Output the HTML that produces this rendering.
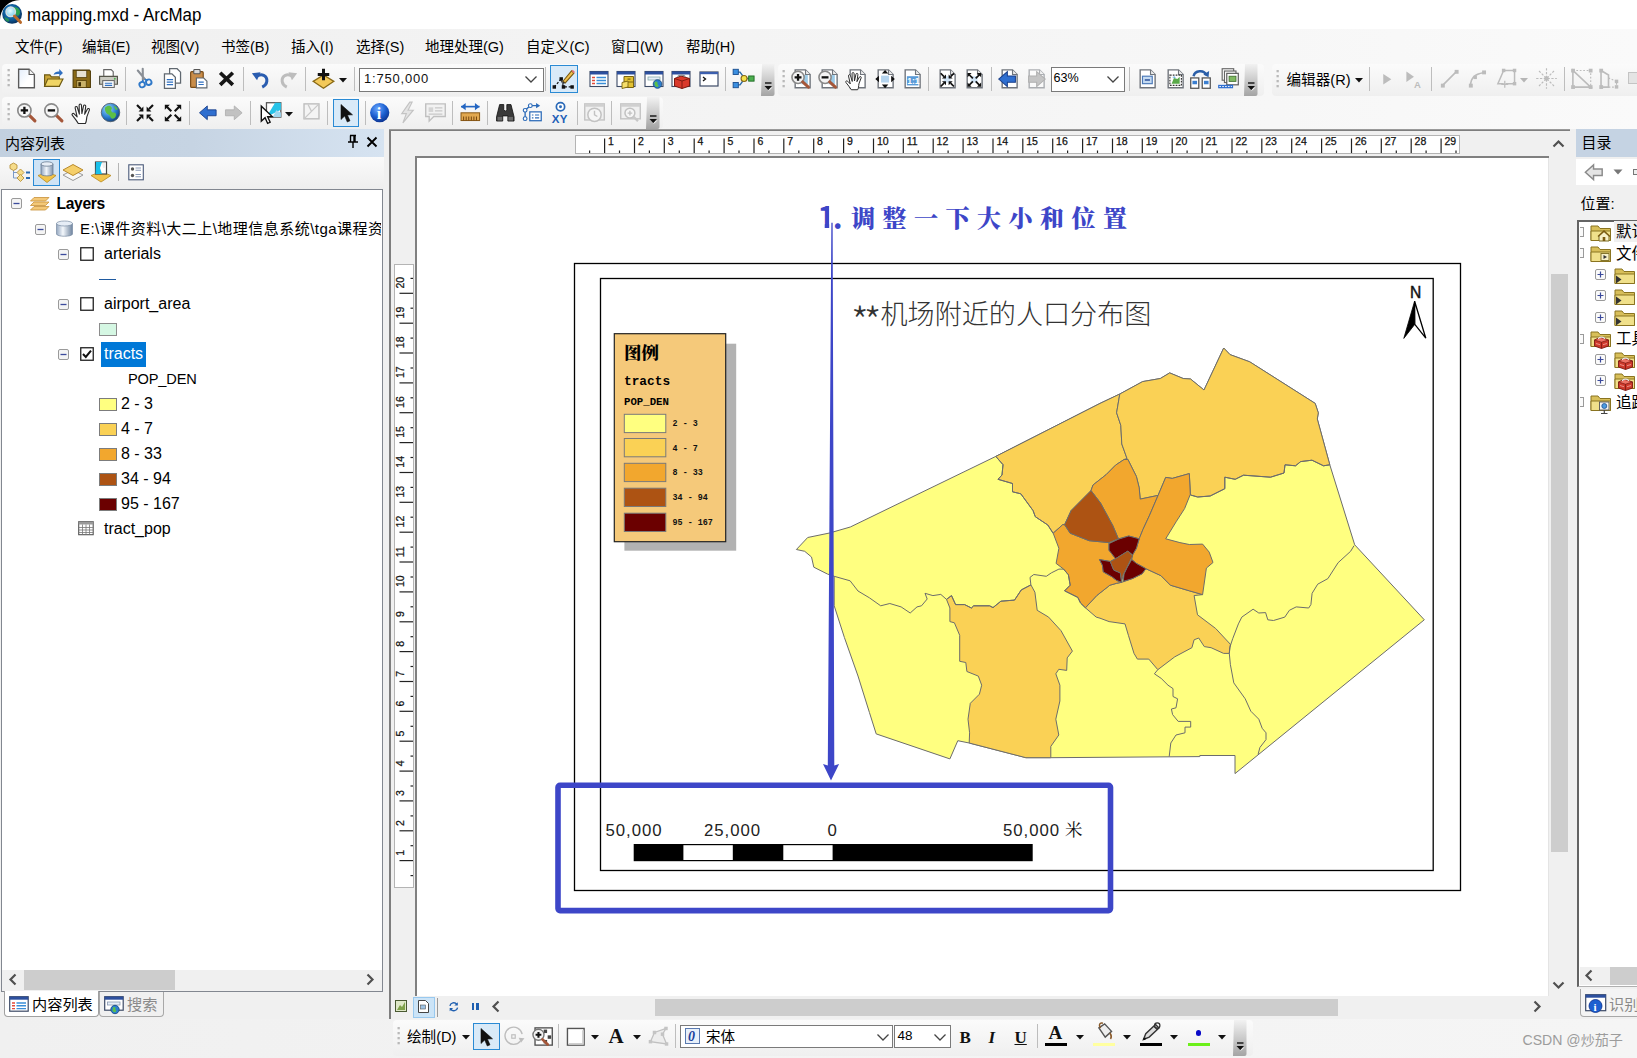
<!DOCTYPE html><html><head><meta charset="utf-8"><title>mapping.mxd - ArcMap</title><style>
html,body{margin:0;padding:0}
body{width:1637px;height:1058px;overflow:hidden;background:#f0f0f0;position:relative;font-family:"Liberation Sans","Noto Sans CJK SC",sans-serif;}
.a{position:absolute;box-sizing:border-box}
.t{position:absolute;white-space:nowrap;}
svg{position:absolute;overflow:visible}
.sep{position:absolute;width:1px;background:#c5c5c5}
</style></head><body>
<div class="a" style="left:0px;top:0px;width:1637px;height:29px;background:#fff"></div>
<svg style="left:0px;top:0px" width="26" height="28" viewBox="0 0 26 28"><defs><radialGradient id="gl" cx="45%" cy="40%" r="65%"><stop offset="0" stop-color="#2f9fd0"/><stop offset="0.55" stop-color="#0f5f9f"/><stop offset="1" stop-color="#06264f"/></radialGradient><radialGradient id="lens" cx="45%" cy="40%" r="60%"><stop offset="0" stop-color="#e8fbff"/><stop offset="1" stop-color="#7fd0ee"/></radialGradient></defs><circle cx="12.1" cy="13.9" r="9.9" fill="url(#gl)"/><path d="M14 7.5c2-.8 4.5.5 5.5 2.5s.5 4.5-1 5.5-2-1-3.5-2-2-4.5-1-6z" fill="#2fa84a" opacity="0.9"/><path d="M4.5 17c1.5 1 3.5 1 4.5 2.5s-.5 2.5-2 2-2.5-2.5-2.5-4.5z" fill="#2fa84a" opacity="0.7"/><circle cx="10.7" cy="11.8" r="4.7" fill="url(#lens)" stroke="#d8dde2" stroke-width="1.5"/><path d="M14.5 16 L20.5 22.3" stroke="#b8692a" stroke-width="3" stroke-linecap="round"/><path d="M0 0H20A20 20 0 0 0 0 20z" fill="#000"/></svg>
<div class="t " style="left:27px;top:2.3px;font-size:18.3px;line-height:25px;height:25px;color:#000;transform:scaleX(0.928);transform-origin:0 50%">mapping.mxd - ArcMap</div>
<div class="a" style="left:0px;top:29px;width:1637px;height:100px;background:linear-gradient(90deg,#f0f0f0 0%,#f4f4f4 45%,#f7f7f7 78%,#fafafa 100%)"></div>
<div class="t " style="left:15px;top:36.6px;font-size:14.5px;line-height:20px;height:20px;color:#000;">文件(F)</div>
<div class="t " style="left:82px;top:36.6px;font-size:14.5px;line-height:20px;height:20px;color:#000;">编辑(E)</div>
<div class="t " style="left:151px;top:36.6px;font-size:14.5px;line-height:20px;height:20px;color:#000;">视图(V)</div>
<div class="t " style="left:221px;top:36.6px;font-size:14.5px;line-height:20px;height:20px;color:#000;">书签(B)</div>
<div class="t " style="left:291px;top:36.6px;font-size:14.5px;line-height:20px;height:20px;color:#000;">插入(I)</div>
<div class="t " style="left:356px;top:36.6px;font-size:14.5px;line-height:20px;height:20px;color:#000;">选择(S)</div>
<div class="t " style="left:425px;top:36.6px;font-size:14.5px;line-height:20px;height:20px;color:#000;">地理处理(G)</div>
<div class="t " style="left:526px;top:36.6px;font-size:14.5px;line-height:20px;height:20px;color:#000;">自定义(C)</div>
<div class="t " style="left:611px;top:36.6px;font-size:14.5px;line-height:20px;height:20px;color:#000;">窗口(W)</div>
<div class="t " style="left:686px;top:36.6px;font-size:14.5px;line-height:20px;height:20px;color:#000;">帮助(H)</div>
<div class="a" style="left:2px;top:64px;width:773px;height:32px;background:linear-gradient(180deg,#fbfbfb,#efefef);border-radius:4px"></div>
<svg style="left:7.3px;top:68px" width="4" height="20" viewBox="0 0 4 20"><rect x="0.5" y="1" width="2.3" height="2.3" fill="#b9b9b9"/><rect x="0.5" y="6" width="2.3" height="2.3" fill="#b9b9b9"/><rect x="0.5" y="11" width="2.3" height="2.3" fill="#b9b9b9"/><rect x="0.5" y="16" width="2.3" height="2.3" fill="#b9b9b9"/></svg>
<svg style="left:15.5px;top:68px" width="21" height="21" viewBox="0 0 20 20"><defs><linearGradient id="nd" x1="0" y1="0" x2="1" y2="1"><stop offset="0" stop-color="#e4eefb"/><stop offset="0.6" stop-color="#fff"/></linearGradient></defs><path d="M2.5 1.2h10l5 5v12.6h-15z" fill="url(#nd)" stroke="#5a5a5a" stroke-width="1.3"/><path d="M12.5 1.2v5h5" fill="#f2f2f2" stroke="#5a5a5a" stroke-width="1.1"/></svg>
<svg style="left:43px;top:68px" width="21" height="21" viewBox="0 0 20 20"><path d="M1.5 17.5v-11h5l1.5 2h7.5v9z" fill="#c9a437" stroke="#6e5a14" stroke-width="1.1"/><path d="M1.5 17.5l3-7h14.5l-3.5 7z" fill="#f0d565" stroke="#6e5a14" stroke-width="1.1"/><path d="M10 6.5c1-3 3.5-3.5 5.5-3.2V1l3.5 3.7-3.5 3.5V5.8c-2-.3-3.7 0-5.5.7z" fill="#2f6fc0"/></svg>
<svg style="left:70.5px;top:68px" width="21" height="21" viewBox="0 0 20 20"><path d="M2 2h15.5l1 1v15.5h-16.500z" fill="#8a6a16" stroke="#4f3b08" stroke-width="1"/><rect x="5" y="2.5" width="10" height="6.5" fill="#e7e2d2" stroke="#4f3b08" stroke-width="0.7"/><rect x="5.5" y="12" width="9" height="6.5" fill="#c9b26a" stroke="#4f3b08" stroke-width="0.7"/><rect x="7" y="13.5" width="2.5" height="4" fill="#3a2b06"/></svg>
<svg style="left:97.5px;top:68px" width="21" height="21" viewBox="0 0 20 20"><path d="M5.5 8V1.500h7l2 2V8" fill="#fff" stroke="#666" stroke-width="1.1"/><path d="M1.5 8h17v7.500h-17z" fill="#c9c9c0" stroke="#55554a" stroke-width="1.1"/><rect x="4.5" y="12" width="11" height="6.5" fill="#fff" stroke="#666" stroke-width="1"/><path d="M6.5 14.500h7M6.5 16.500h7" stroke="#2f6fc0" stroke-width="1.1"/><circle cx="16" cy="10.3" r="0.9" fill="#4caf50"/></svg>
<svg style="left:133px;top:68px" width="21" height="21" viewBox="0 0 20 20"><g transform="rotate(-20 10 10)"><path d="M7.5 1 L11 11M12.5 1 L9 11" stroke="#8a8f96" stroke-width="2" stroke-linecap="round"/><circle cx="6.8" cy="15" r="2.6" fill="none" stroke="#2f78c8" stroke-width="1.8"/><circle cx="13.5" cy="15" r="2.6" fill="none" stroke="#2f78c8" stroke-width="1.8"/><path d="M9 11l-1.3 2M11 11l1.5 2" stroke="#2f78c8" stroke-width="1.6"/></g></svg>
<svg style="left:160.5px;top:67px" width="23" height="23" viewBox="0 0 20 20"><path d="M7.5 1.500h6.500l3 3v9.500h-9.500z" fill="#fff" stroke="#606870" stroke-width="1.1"/><path d="M3 6h6.500l3 3v9.500h-9.500z" fill="#fff" stroke="#606870" stroke-width="1.1"/><path d="M5 11h5.500M5 13.200h5.500M5 15.400h5.5" stroke="#2f6fc0" stroke-width="1.1"/></svg>
<svg style="left:188px;top:68px" width="21" height="21" viewBox="0 0 20 20"><rect x="2.5" y="3.5" width="12" height="15" rx="1" fill="#c98d4a" stroke="#7a4b16" stroke-width="1.1"/><rect x="5.5" y="1.5" width="6" height="4" rx="0.8" fill="#d9d9d9" stroke="#555" stroke-width="1"/><path d="M8 9.500h7l3 3v6.500h-10z" fill="#fff" stroke="#606870" stroke-width="1.1"/><path d="M10 13.500h5M10 15.700h5" stroke="#2f6fc0" stroke-width="1.1"/></svg>
<svg style="left:214.5px;top:67px" width="23" height="23" viewBox="0 0 20 20"><path d="M4.5 5 L15.5 15.500M15.5 5 L4.5 15.5" stroke="#161616" stroke-width="3.2"/></svg>
<svg style="left:248.5px;top:67px" width="23" height="23" viewBox="0 0 20 20"><path d="M6 8.500c5-3.5 10-1 9.5 4-.300 2.5-2 4-4 5" fill="none" stroke="#2a5db0" stroke-width="2.6"/><path d="M2.5 5.500l7.5-1-3 7z" fill="#2a5db0"/></svg>
<svg style="left:276.5px;top:67px" width="23" height="23" viewBox="0 0 20 20"><path d="M14 8.500c-5-3.5-10-1-9.5 4 .300 2.5 2 4 4 5" fill="none" stroke="#bdbdbd" stroke-width="2.6"/><path d="M17.5 5.500l-7.5-1 3 7z" fill="#bdbdbd"/></svg>
<svg style="left:311.5px;top:67px" width="23" height="23" viewBox="0 0 20 20"><path d="M1 12.5 L10 7 L19 12.5 L10 18.500z" fill="#f3c95a" stroke="#8a6a16" stroke-width="1.1"/><path d="M10 1.500v10M5 6.500h10" stroke="#111" stroke-width="2.6"/></svg>
<div class="a" style="left:125px;top:66.5px;width:1px;height:24px;background:#bdbdbd"></div>
<div class="a" style="left:242.5px;top:66.5px;width:1px;height:24px;background:#bdbdbd"></div>
<div class="a" style="left:305px;top:66.5px;width:1px;height:24px;background:#bdbdbd"></div>
<div class="a" style="left:354px;top:66.5px;width:1px;height:24px;background:#bdbdbd"></div>
<div class="a" style="left:545px;top:66.5px;width:1px;height:24px;background:#bdbdbd"></div>
<div class="a" style="left:725px;top:66.5px;width:1px;height:24px;background:#bdbdbd"></div>
<svg style="left:338.5px;top:77.5px" width="8" height="5" viewBox="0 0 8 5"><path d="M0 0h8l-4 4.500z" fill="#111"/></svg>
<div class="a" style="left:359px;top:67.5px;width:184.5px;height:24px;background:#fff;border:1px solid #7a7a7a"></div>
<div class="t " style="left:364px;top:70px;font-size:13px;line-height:18px;height:18px;color:#111;letter-spacing:0.8px">1:750,000</div>
<svg style="left:524px;top:75px" width="14" height="9" viewBox="0 0 14 9"><path d="M1.5 1.500l5.5 5.5 5.5-5.5" fill="none" stroke="#444" stroke-width="1.3"/></svg>
<div class="a" style="left:550px;top:65px;width:27.5px;height:28px;background:#d9eaf8;border:1px solid #2a8ad4"></div>
<svg style="left:552px;top:67.5px" width="23" height="23" viewBox="0 0 20 20"><path d="M2 16.5 L8 9.5 L10 16.5 L18 16.5" fill="none" stroke="#111" stroke-width="1.1" stroke-dasharray="2 1.5"/><rect x="0.5" y="15" width="3" height="3" fill="#111"/><rect x="8.5" y="15" width="3" height="3" fill="#111"/><rect x="16" y="15" width="3" height="3" fill="#111"/><rect x="6.5" y="8" width="3" height="3" fill="#111"/><path d="M9.5 11.5 L17 2.5 L19 4.5 L11.5 13z" fill="#f2c14e" stroke="#7a5a10" stroke-width="0.9"/><path d="M17 2.500l1-1 2 2-1 1z" fill="#e57373"/><path d="M9.5 11.500l-.800 2.8 2.8-1.300z" fill="#333"/></svg>
<svg style="left:588.5px;top:68.5px" width="20" height="20" viewBox="0 0 20 20"><rect x="1" y="2.5" width="18" height="15" fill="#fff" stroke="#3c4a66" stroke-width="1.1"/><rect x="1" y="2.5" width="18" height="3" fill="#2c4f9e"/><path d="M3 8.500h3M3 11.500h3M3 14.500h3" stroke="#e24a3a" stroke-width="1.5"/><path d="M7.5 8.500h9.500M7.5 11.500h9.500M7.5 14.500h9.5" stroke="#3a8ed8" stroke-width="1.5"/></svg>
<svg style="left:616px;top:68.5px" width="20" height="20" viewBox="0 0 20 20"><rect x="1" y="2.5" width="18" height="15" fill="#fff" stroke="#3c4a66" stroke-width="1.1"/><rect x="1" y="2.5" width="18" height="3" fill="#2c4f9e"/><path d="M8 7.500h9.500v11h-9.500z" fill="#e3c233" stroke="#7a6410" stroke-width="1"/><path d="M8 13h9.5" stroke="#7a6410"/><path d="M6 13.500l6-1.500v6l-6 1.500z" fill="#f5de6a" stroke="#7a6410" stroke-width="0.9"/><rect x="11.5" y="9.5" width="3" height="1.2" fill="#7a6410"/></svg>
<svg style="left:643.5px;top:68.5px" width="20" height="20" viewBox="0 0 20 20"><rect x="1" y="2.5" width="18" height="15" fill="#fff" stroke="#3c4a66" stroke-width="1.1"/><rect x="1" y="2.5" width="18" height="3" fill="#2c4f9e"/><rect x="4" y="8" width="12" height="3" fill="#e6eef8" stroke="#8aa" stroke-width="0.8"/><circle cx="13.5" cy="15" r="4.3" fill="#2b7fd0" stroke="#14457a" stroke-width="0.8"/><path d="M11 13c1.5-1 3 0 2.5 1.500s1.5 1 1 2.5-3 1-3.5-.500-1-2.5 0-3.500z" fill="#5cc04a"/></svg>
<svg style="left:671px;top:68.5px" width="20" height="20" viewBox="0 0 20 20"><rect x="1" y="2.5" width="18" height="15" fill="#fff" stroke="#3c4a66" stroke-width="1.1"/><rect x="1" y="2.5" width="18" height="3" fill="#2c4f9e"/><path d="M3.5 9.5 L10 7 L18.5 9.5 V17 L11 19.5 L3.5 17z" fill="#d9392b" stroke="#7a1810" stroke-width="1"/><path d="M3.5 9.5 L11 12 L18.5 9.500M11 12v7.5" stroke="#7a1810" fill="none" stroke-width="0.9"/><path d="M7 8 c0-2.5 7-2.5 7 0" fill="none" stroke="#888" stroke-width="1.3"/></svg>
<svg style="left:698.5px;top:68.5px" width="20" height="20" viewBox="0 0 20 20"><rect x="1" y="3" width="18" height="14" fill="#fff" stroke="#3c4a66" stroke-width="1.2"/><rect x="1" y="3" width="18" height="2.2" fill="#3c5fae"/><path d="M4 8l2.5 2L4 12" fill="none" stroke="#111" stroke-width="1.3"/></svg>
<svg style="left:732px;top:67px" width="23" height="23" viewBox="0 0 20 20"><path d="M4 4.500h3l4 5.500h6M4 15.500h3l4-5.5" fill="none" stroke="#2b6aa8" stroke-width="1.2"/><rect x="1" y="2" width="4.5" height="4.5" fill="#3b8fe0" stroke="#1b4f90" stroke-width="0.8"/><rect x="1" y="13.5" width="4.5" height="4.5" fill="#3b8fe0" stroke="#1b4f90" stroke-width="0.8"/><circle cx="10.5" cy="10" r="2.6" fill="#f5e34a" stroke="#8a6a16" stroke-width="1"/><rect x="14.5" y="7.8" width="4.7" height="4.5" fill="#4caf50" stroke="#1f6b24" stroke-width="0.8"/></svg>
<svg style="left:761px;top:64px" width="14" height="32" viewBox="0 0 14 32"><defs><linearGradient id="og761" x1="0" y1="0" x2="0" y2="1"><stop offset="0" stop-color="#f2f2f2"/><stop offset="1" stop-color="#a4a4a4"/></linearGradient></defs><path d="M1 0h12.500v30 q0 2 -2 2 h-11.500z" fill="url(#og761)"/><path d="M4 19h6.5" stroke="#111" stroke-width="1.4"/><path d="M3.5 22h7.500l-3.750 4z" fill="#111"/><path d="M7.8 26.5 l3 -3" stroke="#fff" stroke-width="1"/></svg>
<div class="a" style="left:778px;top:64px;width:486px;height:32px;background:linear-gradient(180deg,#fbfbfb,#efefef);border-radius:4px"></div>
<svg style="left:782px;top:69px" width="4" height="20" viewBox="0 0 4 20"><rect x="0.5" y="1" width="2.3" height="2.3" fill="#b9b9b9"/><rect x="0.5" y="6" width="2.3" height="2.3" fill="#b9b9b9"/><rect x="0.5" y="11" width="2.3" height="2.3" fill="#b9b9b9"/><rect x="0.5" y="16" width="2.3" height="2.3" fill="#b9b9b9"/></svg>
<svg style="left:789.5px;top:67px" width="23" height="23" viewBox="0 0 20 20"><path d="M4.5 2.500h9l4 4v11.500h-13z" fill="#fff" stroke="#70757c" stroke-width="1.2"/><path d="M13.5 2.500v4h4" fill="#eee" stroke="#70757c" stroke-width="1"/><rect x="10" y="7" width="5.5" height="8" fill="#9ccbe8"/><circle cx="7" cy="9" r="5.3" fill="#f4f4f4" stroke="#8a8a8a" stroke-width="1.4"/><path d="M4 9h6M7 6v6" stroke="#111" stroke-width="2"/><path d="M11 13l5 4.5" stroke="#a5573a" stroke-width="2.6" stroke-linecap="round"/></svg>
<svg style="left:817px;top:67px" width="23" height="23" viewBox="0 0 20 20"><path d="M4.5 2.500h9l4 4v11.500h-13z" fill="#fff" stroke="#70757c" stroke-width="1.2"/><path d="M13.5 2.500v4h4" fill="#eee" stroke="#70757c" stroke-width="1"/><rect x="10" y="7" width="5.5" height="8" fill="#9ccbe8"/><circle cx="7" cy="9" r="5.3" fill="#f4f4f4" stroke="#8a8a8a" stroke-width="1.4"/><path d="M4 9h6" stroke="#111" stroke-width="2"/><path d="M11 13l5 4.5" stroke="#a5573a" stroke-width="2.6" stroke-linecap="round"/></svg>
<svg style="left:844.5px;top:67px" width="23" height="23" viewBox="0 0 20 20"><path d="M4.5 2.500h9l4 4v11.500h-13z" fill="#fff" stroke="#70757c" stroke-width="1.2"/><path d="M13.5 2.500v4h4" fill="#eee" stroke="#70757c" stroke-width="1"/><g transform="translate(-0.5,3.2) scale(0.85)"><path d="M7 19.5C5.5 17 3.5 14.5 1.5 12C0.8 11 2.2 9.8 3.3 10.8L6 13.5L4.2 5.5C3.9 4 5.8 3.5 6.2 5L8 11L7.8 3C7.8 1.5 9.8 1.5 9.9 3L10.3 10.5L11.8 3.6C12.1 2.2 14 2.6 13.8 4L12.8 11.2L15.3 6.5C16 5.3 17.6 6.1 17.1 7.4L14.8 13.5C14.5 16 14.5 18 13.5 19.5Z" fill="#fff" stroke="#2a2a2a" stroke-width="1" stroke-linejoin="round"/></g></svg>
<svg style="left:872.5px;top:67px" width="23" height="23" viewBox="0 0 20 20"><path d="M4.5 2.500h9l4 4v11.500h-13z" fill="#fff" stroke="#70757c" stroke-width="1.2"/><path d="M13.5 2.500v4h4" fill="#eee" stroke="#70757c" stroke-width="1"/><rect x="7" y="7.5" width="7" height="6" fill="#b5d4ee"/><path d="M10.5 2.500l2.8 3.200h-5.600zM10.5 18.500l2.8-3.200h-5.600zM2 10.500l3.2-2.800v5.600zM19 10.500l-3.2-2.800v5.600z" fill="#111"/></svg>
<svg style="left:899.8px;top:67px" width="23" height="23" viewBox="0 0 20 20"><path d="M4.5 2.500h9l4 4v11.500h-13z" fill="#fff" stroke="#70757c" stroke-width="1.2"/><path d="M13.5 2.500v4h4" fill="#eee" stroke="#70757c" stroke-width="1"/><rect x="6" y="8" width="10" height="8" fill="#5a9bd8"/><text x="6.2" y="15" font-family="Liberation Sans,sans-serif" font-size="7.5" font-weight="bold" fill="#fff">1:1</text></svg>
<svg style="left:934.8px;top:67px" width="23" height="23" viewBox="0 0 20 20"><path d="M4.5 2.500h9l4 4v11.500h-13z" fill="#fff" stroke="#70757c" stroke-width="1.2"/><path d="M13.5 2.500v4h4" fill="#eee" stroke="#70757c" stroke-width="1"/><rect x="7.5" y="8" width="6" height="5.5" fill="#cfe3f5"/><g transform="translate(3.5,4) scale(0.720)"><g transform=""><path d="M8.4 8.4V3.6L3.6 8.4z" fill="#111"/><path d="M2 2L6 6" stroke="#111" stroke-width="2.1"/></g><g transform="matrix(-1 0 0 1 20 0)"><path d="M8.4 8.4V3.6L3.6 8.4z" fill="#111"/><path d="M2 2L6 6" stroke="#111" stroke-width="2.1"/></g><g transform="matrix(1 0 0 -1 0 20)"><path d="M8.4 8.4V3.6L3.6 8.4z" fill="#111"/><path d="M2 2L6 6" stroke="#111" stroke-width="2.1"/></g><g transform="matrix(-1 0 0 -1 20 20)"><path d="M8.4 8.4V3.6L3.6 8.4z" fill="#111"/><path d="M2 2L6 6" stroke="#111" stroke-width="2.1"/></g></g></svg>
<svg style="left:962.2px;top:67px" width="23" height="23" viewBox="0 0 20 20"><path d="M4.5 2.500h9l4 4v11.500h-13z" fill="#fff" stroke="#70757c" stroke-width="1.2"/><path d="M13.5 2.500v4h4" fill="#eee" stroke="#70757c" stroke-width="1"/><rect x="7.5" y="8" width="6" height="5.5" fill="#cfe3f5"/><g transform="translate(3.5,4) scale(0.720)"><g transform=""><path d="M1.8 1.8h5L1.8 6.8z" fill="#111"/><path d="M3.8 3.8L8.3 8.3" stroke="#111" stroke-width="2.1"/></g><g transform="matrix(-1 0 0 1 20 0)"><path d="M1.8 1.8h5L1.8 6.8z" fill="#111"/><path d="M3.8 3.8L8.3 8.3" stroke="#111" stroke-width="2.1"/></g><g transform="matrix(1 0 0 -1 0 20)"><path d="M1.8 1.8h5L1.8 6.8z" fill="#111"/><path d="M3.8 3.8L8.3 8.3" stroke="#111" stroke-width="2.1"/></g><g transform="matrix(-1 0 0 -1 20 20)"><path d="M1.8 1.8h5L1.8 6.8z" fill="#111"/><path d="M3.8 3.8L8.3 8.3" stroke="#111" stroke-width="2.1"/></g></g></svg>
<svg style="left:997.2px;top:67px" width="23" height="23" viewBox="0 0 20 20"><path d="M4.5 2.500h9l4 4v11.500h-13z" fill="#fff" stroke="#70757c" stroke-width="1.2"/><path d="M13.5 2.500v4h4" fill="#eee" stroke="#70757c" stroke-width="1"/><path d="M1.5 10.5 L9 4v3.800h7v5.400h-7V17z" fill="#2f6fd0" stroke="#1a3f8a" stroke-width="0.9"/></svg>
<svg style="left:1024.1px;top:67px" width="23" height="23" viewBox="0 0 20 20"><g opacity="0.550"><path d="M4.5 2.500h9l4 4v11.500h-13z" fill="#fff" stroke="#70757c" stroke-width="1.2"/><path d="M13.5 2.500v4h4" fill="#eee" stroke="#70757c" stroke-width="1"/></g><path d="M18.5 10.5 L11 4v3.800h-7v5.400h7V17z" fill="#c4c4c4" stroke="#b0b0b0" stroke-width="0.9"/></svg>
<svg style="left:1135.4px;top:67px" width="23" height="23" viewBox="0 0 20 20"><path d="M4.5 2.500h9l4 4v11.500h-13z" fill="#fff" stroke="#70757c" stroke-width="1.2"/><path d="M13.5 2.500v4h4" fill="#eee" stroke="#70757c" stroke-width="1"/><rect x="6.5" y="8" width="8.5" height="6.5" fill="#c5dbf2" stroke="#4a78b8" stroke-width="1"/><path d="M8.5 11.300h4.5" stroke="#2a4f9a" stroke-width="1.3"/></svg>
<svg style="left:1162.8px;top:67px" width="23" height="23" viewBox="0 0 20 20"><path d="M4.5 2.500h9l4 4v11.500h-13z" fill="#fff" stroke="#70757c" stroke-width="1.2"/><path d="M13.5 2.500v4h4" fill="#eee" stroke="#70757c" stroke-width="1"/><rect x="6" y="7" width="10" height="9" fill="none" stroke="#333" stroke-width="1" stroke-dasharray="1.5 1"/><path d="M7.5 14.500l2-5 3 1 2-2v6z" fill="#5aa94a"/><path d="M8 9l2-1 1.5 2" fill="#6aaee0"/></svg>
<svg style="left:1189.3px;top:67px" width="23" height="23" viewBox="0 0 20 20"><path d="M4 8c1-5 9-6 11-1" fill="none" stroke="#2b5fa8" stroke-width="2.2"/><path d="M17.5 3.500l-.500 5.5-4.5-2.500z" fill="#2b5fa8"/><rect x="1.5" y="9.5" width="7" height="9" fill="#fff" stroke="#555" stroke-width="1.1"/><rect x="11.5" y="9.5" width="7" height="9" fill="#fff" stroke="#555" stroke-width="1.1"/><rect x="3" y="12" width="4" height="3" fill="#3b7fd0"/><rect x="13" y="12" width="4" height="3" fill="#3b7fd0"/></svg>
<svg style="left:1216.7px;top:67px" width="23" height="23" viewBox="0 0 20 20"><rect x="4.5" y="1.5" width="10" height="10" fill="#fff" stroke="#666" stroke-width="1"/><rect x="6.5" y="3.5" width="10" height="10" fill="#fff" stroke="#666" stroke-width="1"/><rect x="8.5" y="5.5" width="10" height="10" fill="#fff" stroke="#555" stroke-width="1"/><rect x="10.5" y="8" width="6" height="4.5" fill="#7fb860" stroke="#3b6a2a" stroke-width="0.7"/><rect x="1" y="15.5" width="13" height="3" fill="#2f6fd0"/><path d="M2 17h11" stroke="#fff" stroke-width="0.8" stroke-dasharray="1.5 1"/></svg>
<div class="a" style="left:928.3px;top:66.5px;width:1px;height:24px;background:#bdbdbd"></div>
<div class="a" style="left:990.7px;top:66.5px;width:1px;height:24px;background:#bdbdbd"></div>
<div class="a" style="left:1129.4px;top:66.5px;width:1px;height:24px;background:#bdbdbd"></div>
<div class="a" style="left:1050.5px;top:66.5px;width:74px;height:25px;background:#fff;border:1px solid #7a7a7a"></div>
<div class="t " style="left:1053.5px;top:70px;font-size:12.6px;line-height:17px;height:17px;color:#000;">63%</div>
<svg style="left:1106px;top:75px" width="14" height="9" viewBox="0 0 14 9"><path d="M1.5 1.500l5.5 5.5 5.5-5.5" fill="none" stroke="#444" stroke-width="1.3"/></svg>
<svg style="left:1244px;top:64px" width="14" height="32" viewBox="0 0 14 32"><defs><linearGradient id="og1244" x1="0" y1="0" x2="0" y2="1"><stop offset="0" stop-color="#f2f2f2"/><stop offset="1" stop-color="#a4a4a4"/></linearGradient></defs><path d="M1 0h12.500v30 q0 2 -2 2 h-11.500z" fill="url(#og1244)"/><path d="M4 19h6.5" stroke="#111" stroke-width="1.4"/><path d="M3.5 22h7.500l-3.750 4z" fill="#111"/><path d="M7.8 26.5 l3 -3" stroke="#fff" stroke-width="1"/></svg>
<div class="a" style="left:1272px;top:64px;width:380px;height:32px;background:linear-gradient(180deg,#fbfbfb,#efefef);border-radius:4px"></div>
<svg style="left:1276px;top:69px" width="4" height="20" viewBox="0 0 4 20"><rect x="0.5" y="1" width="2.3" height="2.3" fill="#b9b9b9"/><rect x="0.5" y="6" width="2.3" height="2.3" fill="#b9b9b9"/><rect x="0.5" y="11" width="2.3" height="2.3" fill="#b9b9b9"/><rect x="0.5" y="16" width="2.3" height="2.3" fill="#b9b9b9"/></svg>
<div class="t " style="left:1286.5px;top:69.5px;font-size:14.6px;line-height:20px;height:20px;color:#000;">编辑器(R)</div>
<svg style="left:1355px;top:77.5px" width="8" height="5" viewBox="0 0 8 5"><path d="M0 0h8l-4 4.500z" fill="#111"/></svg>
<div class="a" style="left:1369px;top:66.5px;width:1px;height:24px;background:#bdbdbd"></div>
<div class="a" style="left:1431.4px;top:66.5px;width:1px;height:24px;background:#bdbdbd"></div>
<div class="a" style="left:1563.6px;top:66.5px;width:1px;height:24px;background:#bdbdbd"></div>
<svg style="left:1379px;top:71px" width="17" height="17" viewBox="0 0 20 20"><path d="M5 3.500v12.500l9.5-6.300z" fill="#bcbcbc"/></svg>
<svg style="left:1404.4px;top:69.5px" width="19" height="19" viewBox="0 0 20 20"><path d="M2.5 1.500v11l8-5.500z" fill="#bcbcbc"/><text x="10.5" y="18.5" font-family="Liberation Sans,sans-serif" font-weight="bold" font-size="10" fill="#bcbcbc">A</text></svg>
<svg style="left:1438.3px;top:67px" width="23" height="23" viewBox="0 0 20 20"><path d="M4 16L16 4" stroke="#bcbcbc" stroke-width="1.4"/><rect x="2.5" y="14.5" width="3.4" height="3.4" fill="#bcbcbc"/><rect x="14.5" y="2.5" width="3.4" height="3.4" fill="#bcbcbc"/></svg>
<svg style="left:1466.3px;top:67px" width="23" height="23" viewBox="0 0 20 20"><path d="M4 16c0-6 4-10 11-11" fill="none" stroke="#bcbcbc" stroke-width="1.4"/><rect x="2.5" y="14.5" width="3.4" height="3.4" fill="#bcbcbc"/><rect x="14" y="3" width="3.4" height="3.4" fill="#bcbcbc"/><rect x="6.5" y="7.5" width="3" height="3" fill="#bcbcbc"/></svg>
<svg style="left:1494.7px;top:67px" width="23" height="23" viewBox="0 0 20 20"><path d="M7.5 3h9.500v11.500h-7.500M7.5 3 L2.5 14.500h5" fill="none" stroke="#bcbcbc" stroke-width="1.3"/><rect x="6" y="1.5" width="3" height="3" fill="#bcbcbc"/><rect x="15.5" y="1.5" width="3" height="3" fill="#bcbcbc"/><rect x="15.5" y="13" width="3" height="3" fill="#bcbcbc"/><path d="M8.5 12v6M5.5 15h6" stroke="#bcbcbc" stroke-width="1.1"/></svg>
<svg style="left:1534.7px;top:67px" width="23" height="23" viewBox="0 0 20 20"><path d="M10 1v18M1 10h18M3.5 3.500l13 13M16.5 3.500l-13 13" stroke="#bcbcbc" stroke-width="1" stroke-dasharray="2 1.3"/><rect x="8.3" y="8.3" width="3.4" height="3.4" fill="#bcbcbc"/></svg>
<svg style="left:1569.5px;top:67px" width="23" height="23" viewBox="0 0 20 20"><path d="M2.5 3v14.500h15.500z" fill="none" stroke="#bcbcbc" stroke-width="1.4"/><path d="M2.5 3h15.500v14.5" fill="none" stroke="#bcbcbc" stroke-width="1" stroke-dasharray="1.5 1.5"/><rect x="1" y="1.5" width="3.3" height="3.3" fill="#bcbcbc"/><rect x="16.3" y="1.5" width="3.3" height="3.3" fill="#bcbcbc"/><rect x="1" y="15.8" width="3.3" height="3.3" fill="#bcbcbc"/><rect x="16.3" y="15.8" width="3.3" height="3.3" fill="#bcbcbc"/></svg>
<svg style="left:1597px;top:67px" width="23" height="23" viewBox="0 0 20 20"><path d="M3.5 3v14.500M3.5 3l6.5 4v10.500h-6.5" fill="none" stroke="#bcbcbc" stroke-width="1.4"/><path d="M10 9.500l7 3v5h-7" fill="none" stroke="#bcbcbc" stroke-width="1" stroke-dasharray="1.5 1.5"/><rect x="2" y="1.5" width="3.3" height="3.3" fill="#bcbcbc"/><rect x="2" y="15.8" width="3.3" height="3.3" fill="#bcbcbc"/><rect x="15.5" y="11" width="3" height="3" fill="#bcbcbc"/><rect x="15.5" y="15.8" width="3" height="3" fill="#bcbcbc"/></svg>
<svg style="left:1519.7px;top:77.5px" width="8" height="5" viewBox="0 0 8 5"><path d="M0 0h8l-4 4.500z" fill="#b5b5b5"/></svg>
<div class="a" style="left:1628px;top:72px;width:12px;height:12px;border:1.5px solid #c4c4c4;background:#e4e4e4"></div>
<div class="a" style="left:2px;top:97px;width:661px;height:32px;background:linear-gradient(180deg,#fbfbfb,#efefef);border-radius:4px"></div>
<svg style="left:7.3px;top:101.5px" width="4" height="20" viewBox="0 0 4 20"><rect x="0.5" y="1" width="2.3" height="2.3" fill="#b9b9b9"/><rect x="0.5" y="6" width="2.3" height="2.3" fill="#b9b9b9"/><rect x="0.5" y="11" width="2.3" height="2.3" fill="#b9b9b9"/><rect x="0.5" y="16" width="2.3" height="2.3" fill="#b9b9b9"/></svg>
<svg style="left:15.5px;top:102px" width="21" height="21" viewBox="0 0 20 20"><path d="M12 12l6 6" stroke="#a5573a" stroke-width="3" stroke-linecap="round"/><circle cx="8" cy="8" r="6.3" fill="#f7f7f7" stroke="#8a8a8a" stroke-width="1.6"/><path d="M4.5 8h7M8 4.500v7" stroke="#111" stroke-width="2.2"/></svg>
<svg style="left:43px;top:102px" width="21" height="21" viewBox="0 0 20 20"><path d="M12 12l6 6" stroke="#a5573a" stroke-width="3" stroke-linecap="round"/><circle cx="8" cy="8" r="6.3" fill="#f7f7f7" stroke="#8a8a8a" stroke-width="1.6"/><path d="M4.5 8h7" stroke="#111" stroke-width="2.2"/></svg>
<svg style="left:70px;top:101.5px" width="22" height="22" viewBox="0 0 20 20"><g transform="translate(0.5,0)"><path d="M7 19.5C5.5 17 3.5 14.5 1.5 12C0.8 11 2.2 9.8 3.3 10.8L6 13.5L4.2 5.5C3.9 4 5.8 3.5 6.2 5L8 11L7.8 3C7.8 1.5 9.8 1.5 9.9 3L10.3 10.5L11.8 3.6C12.1 2.2 14 2.6 13.8 4L12.8 11.2L15.3 6.5C16 5.3 17.6 6.1 17.1 7.4L14.8 13.5C14.5 16 14.5 18 13.5 19.5Z" fill="#fff" stroke="#2a2a2a" stroke-width="1" stroke-linejoin="round"/></g></svg>
<svg style="left:99.5px;top:102px" width="21" height="21" viewBox="0 0 20 20"><defs><radialGradient id="gg" cx="35%" cy="30%" r="75%"><stop offset="0" stop-color="#9fd8ff"/><stop offset="0.6" stop-color="#2b7fd0"/><stop offset="1" stop-color="#123f7a"/></radialGradient></defs><circle cx="10" cy="10" r="8.8" fill="url(#gg)" stroke="#4a5a6a" stroke-width="0.8"/><path d="M5 5c2-2 5-2 6 0s-1 2 0 4 3 0 4 2-1 5-3 5-2-3-4-4-4-4-3-7z" fill="#5cbf45"/><path d="M13 3.500c2 .500 3.5 2 4 3.500l-2 .500z" fill="#5cbf45"/></svg>
<svg style="left:135px;top:102.5px" width="20" height="20" viewBox="0 0 20 20"><g transform=""><path d="M8.4 8.4V3.6L3.6 8.4z" fill="#111"/><path d="M2 2L6 6" stroke="#111" stroke-width="2.1"/></g><g transform="matrix(-1 0 0 1 20 0)"><path d="M8.4 8.4V3.6L3.6 8.4z" fill="#111"/><path d="M2 2L6 6" stroke="#111" stroke-width="2.1"/></g><g transform="matrix(1 0 0 -1 0 20)"><path d="M8.4 8.4V3.6L3.6 8.4z" fill="#111"/><path d="M2 2L6 6" stroke="#111" stroke-width="2.1"/></g><g transform="matrix(-1 0 0 -1 20 20)"><path d="M8.4 8.4V3.6L3.6 8.4z" fill="#111"/><path d="M2 2L6 6" stroke="#111" stroke-width="2.1"/></g></svg>
<svg style="left:162.5px;top:102.5px" width="20" height="20" viewBox="0 0 20 20"><g transform=""><path d="M1.8 1.8h5L1.8 6.8z" fill="#111"/><path d="M3.8 3.8L8.3 8.3" stroke="#111" stroke-width="2.1"/></g><g transform="matrix(-1 0 0 1 20 0)"><path d="M1.8 1.8h5L1.8 6.8z" fill="#111"/><path d="M3.8 3.8L8.3 8.3" stroke="#111" stroke-width="2.1"/></g><g transform="matrix(1 0 0 -1 0 20)"><path d="M1.8 1.8h5L1.8 6.8z" fill="#111"/><path d="M3.8 3.8L8.3 8.3" stroke="#111" stroke-width="2.1"/></g><g transform="matrix(-1 0 0 -1 20 20)"><path d="M1.8 1.8h5L1.8 6.8z" fill="#111"/><path d="M3.8 3.8L8.3 8.3" stroke="#111" stroke-width="2.1"/></g></svg>
<svg style="left:197.7px;top:102.7px" width="19.6" height="19.6" viewBox="0 0 20 20"><path d="M1.5 10 L9.5 3v4h9v6h-9v4z" fill="#2f6fd0" stroke="#1a3f8a" stroke-width="0.9"/></svg>
<svg style="left:223.7px;top:102.7px" width="19.6" height="19.6" viewBox="0 0 20 20"><path d="M18.5 10 L10.5 3v4h-9v6h9v4z" fill="#c2c2c2" stroke="#b0b0b0" stroke-width="0.9"/></svg>
<svg style="left:258.5px;top:101px" width="23" height="23" viewBox="0 0 20 20"><rect x="6.5" y="1.5" width="12.5" height="12.5" fill="#fff" stroke="#555" stroke-width="1.1"/><path d="M6.5 14 L14 1.500h5v6z" fill="#27c3e8"/><path d="M12 14l3-6 4 2v4z" fill="#9fd7ef"/><path d="M2 4.5 L2 17.5 L5.3 14.5 L7.5 19.5 L9.7 18.5 L7.5 13.7 L11.5 13.500z" fill="#fff" stroke="#111" stroke-width="1.2"/></svg>
<svg style="left:299.5px;top:101px" width="23" height="23" viewBox="0 0 20 20"><rect x="3.5" y="2.5" width="13" height="13" fill="#f4f4f4" stroke="#bdbdbd" stroke-width="1.2"/><path d="M3.5 15.5 L10 9 L16.5 2.500M10 9l-3-6" fill="none" stroke="#c8c8c8" stroke-width="1.1"/></svg>
<svg style="left:369.3px;top:101.8px" width="21.4" height="21.4" viewBox="0 0 20 20"><defs><radialGradient id="ig" cx="40%" cy="30%" r="75%"><stop offset="0" stop-color="#6aa8ff"/><stop offset="0.550" stop-color="#1c5fd0"/><stop offset="1" stop-color="#0b2f8a"/></radialGradient></defs><circle cx="10" cy="10" r="9" fill="url(#ig)"/><text x="7.3" y="15.5" font-family="Liberation Serif,serif" font-weight="bold" font-size="15" fill="#fff">i</text></svg>
<svg style="left:396px;top:101px" width="23" height="23" viewBox="0 0 20 20"><path d="M12 1 L5 11h4l-3 8 9-11h-4.500l3.5-7z" fill="#e4e4e4" stroke="#c3c3c3" stroke-width="1"/></svg>
<svg style="left:423.5px;top:101px" width="23" height="23" viewBox="0 0 20 20"><path d="M1.5 2.500h17v11h-10l-4 4v-4h-3z" fill="#f2f2f2" stroke="#c0c0c0" stroke-width="1.2"/><rect x="4" y="5.5" width="4" height="4" fill="#d4d4d4"/><path d="M9.5 6h6.500M9.5 8.500h6.500M4 11.500h12" stroke="#c8c8c8" stroke-width="1.1"/></svg>
<svg style="left:459.7px;top:102.2px" width="20.6" height="20.6" viewBox="0 0 20 20"><path d="M1 4.500h18" stroke="#2466c2" stroke-width="1.6"/><path d="M1 4.500l4.5-3.500v7zM19 4.500l-4.5-3.500v7z" fill="#2466c2"/><rect x="1" y="10.5" width="18" height="7.5" fill="#e2a84f" stroke="#8a5a18" stroke-width="1"/><path d="M3.5 14v4M6 14v4M8.5 14v4M11 14v4M13.5 14v4M16 14v4" stroke="#7a4a10" stroke-width="1"/></svg>
<svg style="left:494.7px;top:102.2px" width="20.6" height="20.6" viewBox="0 0 20 20"><path d="M4.5 2.500h4v5l1.5 1.5 1.5-1.500v-5h4l3 12v4h-6v-5h-5v5h-6v-4z" fill="#3a3a3a" stroke="#111" stroke-width="0.8"/><rect x="2.5" y="14.5" width="4.5" height="3.5" fill="#6a6a6a"/><rect x="13" y="14.5" width="4.5" height="3.5" fill="#6a6a6a"/></svg>
<svg style="left:522.1px;top:102.1px" width="20.8" height="20.8" viewBox="0 0 20 20"><path d="M3 15.500v-7.500l5-4.500h7" fill="none" stroke="#2b6ab8" stroke-width="1.3"/><path d="M13.5 1l4 2.5-4 2.500z" fill="#2b6ab8"/><circle cx="3" cy="8" r="1.8" fill="#fff" stroke="#2b6ab8" stroke-width="1.1"/><circle cx="8" cy="3.5" r="1.8" fill="#fff" stroke="#2b6ab8" stroke-width="1.1"/><circle cx="3" cy="16" r="1.8" fill="#fff" stroke="#2b6ab8" stroke-width="1.1"/><rect x="7.5" y="9.5" width="11" height="8.5" fill="#fff" stroke="#2b6ab8" stroke-width="1.2"/><path d="M9.5 12.500h1.500M12.5 12.500h4M9.5 15.300h1.500M12.5 15.300h4" stroke="#2b6ab8" stroke-width="1.1"/></svg>
<svg style="left:548.5px;top:101px" width="23" height="23" viewBox="0 0 20 20"><circle cx="10" cy="5" r="3.6" fill="#fff" stroke="#2b6ab8" stroke-width="1.5"/><circle cx="10" cy="5" r="1.3" fill="#2b6ab8"/><text x="2.3" y="19" font-family="Liberation Sans,sans-serif" font-weight="bold" font-size="10" fill="#1f5fb8" letter-spacing="0.3">XY</text></svg>
<svg style="left:582.5px;top:101px" width="23" height="23" viewBox="0 0 20 20"><rect x="1.5" y="2.5" width="17" height="14" fill="#f0f0f0" stroke="#c4c4c4" stroke-width="1.2"/><rect x="1.5" y="2.5" width="17" height="2.5" fill="#d0d0d0"/><circle cx="10" cy="12" r="5.8" fill="#f6f6f6" stroke="#c2c2c2" stroke-width="1.3"/><path d="M10 8.500v3.500l2.5 1.5" fill="none" stroke="#c2c2c2" stroke-width="1.2"/></svg>
<svg style="left:618.5px;top:101px" width="23" height="23" viewBox="0 0 20 20"><rect x="1.5" y="2.5" width="17" height="13" fill="#f0f0f0" stroke="#c4c4c4" stroke-width="1.2"/><rect x="1.5" y="2.5" width="17" height="2.5" fill="#d0d0d0"/><circle cx="9.5" cy="10.5" r="4.3" fill="#f6f6f6" stroke="#c2c2c2" stroke-width="1.3"/><path d="M7.5 10.500h4M9.5 8.500v4" stroke="#c2c2c2" stroke-width="1.2"/><path d="M12.5 13.500l4 4" stroke="#c8c8c8" stroke-width="2"/></svg>
<div class="a" style="left:126px;top:100.5px;width:1px;height:24px;background:#bdbdbd"></div>
<div class="a" style="left:189px;top:100.5px;width:1px;height:24px;background:#bdbdbd"></div>
<div class="a" style="left:250px;top:100.5px;width:1px;height:24px;background:#bdbdbd"></div>
<div class="a" style="left:326.5px;top:100.5px;width:1px;height:24px;background:#bdbdbd"></div>
<div class="a" style="left:365px;top:100.5px;width:1px;height:24px;background:#bdbdbd"></div>
<div class="a" style="left:451.5px;top:100.5px;width:1px;height:24px;background:#bdbdbd"></div>
<div class="a" style="left:486.5px;top:100.5px;width:1px;height:24px;background:#bdbdbd"></div>
<div class="a" style="left:576.5px;top:100.5px;width:1px;height:24px;background:#bdbdbd"></div>
<div class="a" style="left:611px;top:100.5px;width:1px;height:24px;background:#bdbdbd"></div>
<svg style="left:285px;top:111.5px" width="8" height="5" viewBox="0 0 8 5"><path d="M0 0h8l-4 4.500z" fill="#111"/></svg>
<div class="a" style="left:332.5px;top:99px;width:26.5px;height:27.5px;background:#d9eaf8;border:1px solid #2a8ad4"></div>
<svg style="left:335.5px;top:102.5px" width="20" height="20" viewBox="0 0 20 20"><path d="M5 1.5 L5 16.5 L8.7 13 L11.3 19 L14 17.8 L11.4 12 L16.5 11.800z" fill="#111" stroke="#111" stroke-width="0.6"/></svg>
<svg style="left:646px;top:97px" width="14" height="32" viewBox="0 0 14 32"><defs><linearGradient id="og646" x1="0" y1="0" x2="0" y2="1"><stop offset="0" stop-color="#f2f2f2"/><stop offset="1" stop-color="#a4a4a4"/></linearGradient></defs><path d="M1 0h12.500v30 q0 2 -2 2 h-11.500z" fill="url(#og646)"/><path d="M4 19h6.5" stroke="#111" stroke-width="1.4"/><path d="M3.5 22h7.500l-3.750 4z" fill="#111"/><path d="M7.8 26.5 l3 -3" stroke="#fff" stroke-width="1"/></svg>
<div class="a" style="left:0px;top:1019px;width:1637px;height:39px;background:linear-gradient(90deg,#f0f0f0 0%,#f3f3f3 45%,#f5f5f5 100%)"></div>
<div class="a" style="left:0px;top:129px;width:384px;height:27.5px;background:linear-gradient(90deg,#c2d0df 0%,#c6d4e3 50%,#d6e3f1 100%)"></div>
<div class="t " style="left:5px;top:132.5px;font-size:15px;line-height:21px;height:21px;color:#000;">内容列表</div>
<svg style="left:346px;top:134px" width="14" height="16" viewBox="0 0 14 16"><path d="M4 1.5h6M4.5 1.5v6M9 1.5v6M8 1.5v6M2 8h10M7 8v6" stroke="#000" stroke-width="1.4" fill="none"/></svg>
<svg style="left:366px;top:136px" width="12" height="12" viewBox="0 0 12 12"><path d="M1.5 1.5L10.5 10.5M10.5 1.5L1.5 10.5" stroke="#000" stroke-width="1.9"/></svg>
<div class="a" style="left:0px;top:156.5px;width:384px;height:32.5px;background:linear-gradient(180deg,#fafafa,#eeeeee)"></div>
<div class="a" style="left:33px;top:158.5px;width:27px;height:27px;background:#cfe3f5;border:1px solid #2a8ad4"></div>
<svg style="left:9px;top:162px" width="22" height="20" viewBox="0 0 22 20"><path d="M4.5 5v11h6M4.5 10.500h4" fill="none" stroke="#7a9ac8" stroke-width="1"/><path d="M4.5 1l3.5 2v3.500l-3.5 2-3.5-2v-3.500z" fill="#f6dc8a" stroke="#b8923a" stroke-width="0.9"/><path d="M11.5 7l3.5 3.5-3.5 3.5-3.5-3.500z" fill="#f6dc8a" stroke="#b8923a" stroke-width="0.9"/><path d="M11.5 12.500l3.5 3.5-3.5 3.5-3.5-3.500z" fill="#f6dc8a" stroke="#b8923a" stroke-width="0.9"/><path d="M17 10.500h4M17 16h4" stroke="#2a6ab0" stroke-width="1.8"/></svg>
<svg style="left:37px;top:161px" width="20" height="22" viewBox="0 0 20 22"><defs><linearGradient id="cy1" x1="0" x2="1"><stop offset="0" stop-color="#8fa3bd"/><stop offset="0.450" stop-color="#f0f5fb"/><stop offset="1" stop-color="#7f93ad"/></linearGradient></defs><path d="M1 14.5 L10 11.5 L19 14.5 L10 21.500z" fill="#f3c44a" stroke="#b88a20" stroke-width="0.8"/><path d="M4 3v10c0 2.5 12 2.5 12 0V3z" fill="url(#cy1)" stroke="#6a7c92" stroke-width="0.8"/><ellipse cx="10" cy="3" rx="6" ry="2.2" fill="#e8eef6" stroke="#6a7c92" stroke-width="0.8"/></svg>
<svg style="left:62px;top:161.5px" width="22" height="20" viewBox="0 0 22 20"><path d="M1 13l10-5 10 5-10 5.500z" fill="#f7f7f7" stroke="#9a9a9a" stroke-width="1"/><path d="M1 8l10-5.5 10 5.5-10 5.500z" fill="#f5cf6a" stroke="#b8892a" stroke-width="1"/></svg>
<svg style="left:90px;top:161px" width="22" height="22" viewBox="0 0 22 22"><path d="M1 14.500l10-4 10 4-10 6.500z" fill="#f3c44a" stroke="#b88a20" stroke-width="0.8"/><rect x="5.5" y="1" width="11" height="12" fill="#fff" stroke="#444" stroke-width="1.2"/><path d="M5.5 13 L6 1h6l-2 6 2 6z" fill="#19c0ea"/><path d="M12 1.500l4 0 0 5-3 .500z" fill="#eee"/></svg>
<div class="a" style="left:118px;top:163px;width:1px;height:18px;background:#b5b5b5"></div>
<svg style="left:128px;top:164px" width="17" height="17" viewBox="0 0 17 17"><rect x="0.8" y="0.8" width="14.5" height="15" fill="#fff" stroke="#4a5a7a" stroke-width="1.1"/><circle cx="4.5" cy="5" r="1.7" fill="#555"/><circle cx="4.5" cy="11.5" r="1.7" fill="#555"/><path d="M7.5 4h5.500M7.5 6.300h5.500M7.5 10.500h5.500M7.5 12.800h5.5" stroke="#8a9ab8" stroke-width="1.1"/></svg>
<div class="a" style="left:0.5px;top:189px;width:382px;height:803px;background:#fff;border:1px solid #828790"></div>
<svg style="left:11px;top:198px" width="11" height="11" viewBox="0 0 11 11"><rect x="0.5" y="0.5" width="10" height="10" rx="1.5" fill="#f4f4f4" stroke="#9a9a9a"/><path d="M2.5 5.5h6" stroke="#3b4a9c" stroke-width="1.3"/></svg>
<svg style="left:30px;top:195px" width="20" height="18" viewBox="0 0 20 18"><path d="M4 2.500h15l-3.5 3.500h-15z" fill="#f4c877" stroke="#c8923a" stroke-width="0.8"/><path d="M4 7h15l-3.5 3.500h-15z" fill="#f4c877" stroke="#c8923a" stroke-width="0.8"/><path d="M4 11.500h15l-3.5 3.500h-15z" fill="#f4c877" stroke="#c8923a" stroke-width="0.8"/></svg>
<div class="t " style="left:56.5px;top:192.5px;font-size:15.6px;line-height:21px;height:21px;color:#000;font-weight:bold;letter-spacing:-0.3px">Layers</div>
<svg style="left:34.5px;top:223.5px" width="11" height="11" viewBox="0 0 11 11"><rect x="0.5" y="0.5" width="10" height="10" rx="1.5" fill="#f4f4f4" stroke="#9a9a9a"/><path d="M2.5 5.5h6" stroke="#3b4a9c" stroke-width="1.3"/></svg>
<svg style="left:54.5px;top:220px" width="20" height="18" viewBox="0 0 20 18"><defs><linearGradient id="cy2" x1="0" x2="1"><stop offset="0" stop-color="#93a6bf"/><stop offset="0.4" stop-color="#f4f8fc"/><stop offset="1" stop-color="#6f849f"/></linearGradient></defs><path d="M1.5 3.500v10.500c0 3 16 3 16 0V3.500z" fill="url(#cy2)" stroke="#7a8ca4" stroke-width="0.7"/><ellipse cx="9.5" cy="3.5" rx="8" ry="2.5" fill="#e6edf6" stroke="#7a8ca4" stroke-width="0.7"/></svg>
<div class="a" style="left:80px;top:218px;width:301px;height:22px;overflow:hidden"><div class="t" style="left:0;top:0;font-size:15px;letter-spacing:0.47px;line-height:22px;">E:\课件资料\大二上\地理信息系统\tga课程资料</div></div>
<svg style="left:57.5px;top:248.5px" width="11" height="11" viewBox="0 0 11 11"><rect x="0.5" y="0.5" width="10" height="10" rx="1.5" fill="#f4f4f4" stroke="#9a9a9a"/><path d="M2.5 5.5h6" stroke="#3b4a9c" stroke-width="1.3"/></svg>
<svg style="left:79.5px;top:247px" width="14" height="14" viewBox="0 0 14 14"><rect x="0.75" y="0.75" width="12.5" height="12.5" fill="#fff" stroke="#222" stroke-width="1.3"/></svg>
<div class="t " style="left:104px;top:242.5px;font-size:16px;line-height:22px;height:22px;color:#000;">arterials</div>
<div class="a" style="left:98.8px;top:278.7px;width:17.5px;height:1.5px;background:#1f5aa0"></div>
<svg style="left:57.5px;top:298.5px" width="11" height="11" viewBox="0 0 11 11"><rect x="0.5" y="0.5" width="10" height="10" rx="1.5" fill="#f4f4f4" stroke="#9a9a9a"/><path d="M2.5 5.5h6" stroke="#3b4a9c" stroke-width="1.3"/></svg>
<svg style="left:79.5px;top:297px" width="14" height="14" viewBox="0 0 14 14"><rect x="0.75" y="0.75" width="12.5" height="12.5" fill="#fff" stroke="#222" stroke-width="1.3"/></svg>
<div class="t " style="left:104px;top:292.5px;font-size:16px;line-height:22px;height:22px;color:#000;">airport_area</div>
<div class="a" style="left:98.7px;top:322.8px;width:18.8px;height:13.3px;background:#d5f7e3;border:1px solid #8c8c8c"></div>
<svg style="left:57.5px;top:348.5px" width="11" height="11" viewBox="0 0 11 11"><rect x="0.5" y="0.5" width="10" height="10" rx="1.5" fill="#f4f4f4" stroke="#9a9a9a"/><path d="M2.5 5.5h6" stroke="#3b4a9c" stroke-width="1.3"/></svg>
<svg style="left:79.5px;top:347px" width="14" height="14" viewBox="0 0 14 14"><rect x="0.75" y="0.75" width="12.5" height="12.5" fill="#fff" stroke="#222" stroke-width="1.3"/><path d="M3 7 L5.8 10 L11 3.6" fill="none" stroke="#111" stroke-width="2"/></svg>
<div class="a" style="left:101.2px;top:342px;width:45px;height:24.5px;background:#0078d7"></div>
<div class="t " style="left:104px;top:342.5px;font-size:16px;line-height:22px;height:22px;color:#fff;">tracts</div>
<div class="t " style="left:128px;top:368.5px;font-size:14.6px;line-height:20px;height:20px;color:#000;letter-spacing:-0.15px">POP_DEN</div>
<div class="a" style="left:98.7px;top:397.7px;width:18.8px;height:13.3px;background:#FFFF80;border:1px solid #7c7c7c"></div>
<div class="t " style="left:121px;top:392.5px;font-size:16px;line-height:22px;height:22px;color:#000;">2 - 3</div>
<div class="a" style="left:98.7px;top:422.7px;width:18.8px;height:13.3px;background:#FAD155;border:1px solid #7c7c7c"></div>
<div class="t " style="left:121px;top:417.5px;font-size:16px;line-height:22px;height:22px;color:#000;">4 - 7</div>
<div class="a" style="left:98.7px;top:447.7px;width:18.8px;height:13.3px;background:#F2A72E;border:1px solid #7c7c7c"></div>
<div class="t " style="left:121px;top:442.5px;font-size:16px;line-height:22px;height:22px;color:#000;">8 - 33</div>
<div class="a" style="left:98.7px;top:472.7px;width:18.8px;height:13.3px;background:#AD5313;border:1px solid #7c7c7c"></div>
<div class="t " style="left:121px;top:467.5px;font-size:16px;line-height:22px;height:22px;color:#000;">34 - 94</div>
<div class="a" style="left:98.7px;top:497.7px;width:18.8px;height:13.3px;background:#6B0000;border:1px solid #7c7c7c"></div>
<div class="t " style="left:121px;top:492.5px;font-size:16px;line-height:22px;height:22px;color:#000;">95 - 167</div>
<svg style="left:78px;top:521px" width="16" height="15" viewBox="0 0 16 15"><rect x="0.7" y="0.7" width="14.5" height="13" fill="#fff" stroke="#555" stroke-width="1.1"/><rect x="0.7" y="0.7" width="14.5" height="2.8" fill="#9a9a9a"/><path d="M0.7 6.500h14.500M0.7 9h14.500M0.7 11.500h14.500M4.5 3.500v10M8 3.500v10M11.5 3.500v10" stroke="#777" stroke-width="0.8"/></svg>
<div class="t " style="left:104px;top:517.5px;font-size:16px;line-height:22px;height:22px;color:#000;">tract_pop</div>
<div class="a" style="left:1.5px;top:969.5px;width:380px;height:21px;background:#f0f0f0"></div>
<div class="a" style="left:24px;top:970px;width:151px;height:19.5px;background:#cdcdcd"></div>
<svg style="left:5px;top:972px" width="16" height="16" viewBox="0 0 16 16"><path d="M10.5 2.5 L5.5 7.5 L10.5 12.5" fill="none" stroke="#505050" stroke-width="2.2"/></svg>
<svg style="left:362px;top:972px" width="16" height="16" viewBox="0 0 16 16"><path d="M5.5 2.5 L10.5 7.5 L5.5 12.5" fill="none" stroke="#505050" stroke-width="2.2"/></svg>
<div class="a" style="left:3.5px;top:991px;width:95px;height:26px;background:#fff;border:1px solid #a0a0a0;border-top:none;border-radius:0 0 4px 4px"></div>
<div class="a" style="left:99px;top:992px;width:64.5px;height:24.5px;background:#f0f0f0;border:1px solid #a8a8a8;border-top:none;border-radius:0 0 4px 4px"></div>
<svg style="left:9px;top:996px" width="20" height="16" viewBox="0 0 20 16"><rect x="0.7" y="0.7" width="18.5" height="14.5" fill="#fff" stroke="#3c4a66" stroke-width="1.2"/><rect x="0.7" y="0.7" width="18.5" height="3" fill="#2c4f9e"/><path d="M3 7h3M3 9.800h3M3 12.600h3" stroke="#e24a3a" stroke-width="1.4"/><path d="M7.5 7h9.500M7.5 9.800h9.500M7.5 12.600h9.5" stroke="#3a8ed8" stroke-width="1.4"/></svg>
<div class="t " style="left:32px;top:994px;font-size:15.2px;line-height:21px;height:21px;color:#000;">内容列表</div>
<svg style="left:104px;top:996px" width="20" height="18" viewBox="0 0 20 18"><rect x="0.7" y="0.7" width="18.5" height="13.5" fill="#fff" stroke="#3c4a66" stroke-width="1.2"/><rect x="0.7" y="0.7" width="18.5" height="3" fill="#2c4f9e"/><rect x="3.5" y="6" width="12.5" height="3" fill="#e6eef8" stroke="#8a9ab0" stroke-width="0.8"/><circle cx="11" cy="13.5" r="4.2" fill="#2b7fd0" stroke="#14457a" stroke-width="0.8"/><path d="M9 11.500c1.5-1 3 0 2.5 1.500s1.5 1 .500 2.5-3 .500-3.5-1z" fill="#5cc04a"/></svg>
<div class="t " style="left:127px;top:994px;font-size:15.2px;line-height:21px;height:21px;color:#8a8a8a;">搜索</div>
<div class="a" style="left:389px;top:129px;width:1181px;height:890px;background:#f0f0f0;border-left:2.6px solid #7e7e7e;border-top:2.6px solid #7e7e7e;"></div>
<div class="a" style="left:389px;top:129px;width:1181px;height:1px;background:#9a9a9a"></div>
<div class="a" style="left:415px;top:155.5px;width:1133.5px;height:841px;background:#fff;border-left:2.5px solid #808080;border-top:2.5px solid #808080;"></div>
<div class="a" style="left:392px;top:996px;width:1178px;height:22.5px;background:#f0f0f0;"></div>
<div class="a" style="left:1548px;top:158px;width:22px;height:838px;background:#f0f0f0;border-left:1px solid #e4e4e4"></div>
<div class="a" style="left:1550.5px;top:274px;width:17px;height:578px;background:#cdcdcd"></div>
<svg style="left:1551px;top:136px" width="16" height="16" viewBox="0 0 16 16"><path d="M2.5 10.5 L7.5 5.5 L12.5 10.5" fill="none" stroke="#505050" stroke-width="2.2"/></svg>
<svg style="left:1551px;top:977px" width="16" height="16" viewBox="0 0 16 16"><path d="M2.5 5.5 L7.5 10.5 L12.5 5.5" fill="none" stroke="#505050" stroke-width="2.2"/></svg>
<div class="a" style="left:655px;top:999px;width:683px;height:17px;background:#cdcdcd"></div>
<svg style="left:488px;top:999px" width="16" height="16" viewBox="0 0 16 16"><path d="M10.5 2.5 L5.5 7.5 L10.5 12.5" fill="none" stroke="#505050" stroke-width="2.2"/></svg>
<svg style="left:1529px;top:999px" width="16" height="16" viewBox="0 0 16 16"><path d="M5.5 2.5 L10.5 7.5 L5.5 12.5" fill="none" stroke="#505050" stroke-width="2.2"/></svg>
<div class="a" style="left:412.5px;top:997px;width:22px;height:21px;background:#cce4f7;border:1px solid #99c9ef"></div>
<svg style="left:395px;top:1000px" width="13" height="13" viewBox="0 0 13 13"><rect x="0.5" y="0.5" width="11" height="11" fill="#dfe8c8" stroke="#4a5a32"/><path d="M2 10 L5 5 L7 7 L10 2 V10z" fill="#7fa24a"/></svg>
<svg style="left:417px;top:999px" width="13" height="15" viewBox="0 0 13 15"><path d="M1.5 1.5h7l3 3v9h-10z" fill="#fff" stroke="#444"/><rect x="3.5" y="6" width="5" height="4" fill="#9cc3e6" stroke="#555" stroke-width="0.6"/></svg>
<div class="a" style="left:436.5px;top:998px;width:1px;height:19px;background:#9a9a9a"></div>
<svg style="left:447.5px;top:1000.5px" width="11.5" height="11.5" viewBox="0 0 15 15"><path d="M2.5 6.5 A5 5 0 0 1 11.5 4.5" fill="none" stroke="#1f5fb0" stroke-width="1.8"/><path d="M12.8 1.5v4.5h-4.5z" fill="#1f5fb0"/><path d="M12.5 8.5 A5 5 0 0 1 3.5 10.5" fill="none" stroke="#1f5fb0" stroke-width="1.8"/><path d="M2.2 13.5v-4.5h4.5z" fill="#1f5fb0"/></svg>
<div class="a" style="left:472px;top:1003px;width:2.4px;height:7px;background:#1f5fb0"></div>
<div class="a" style="left:476.3px;top:1003px;width:2.4px;height:7px;background:#1f5fb0"></div>
<div class="a" style="left:575px;top:134.5px;width:885px;height:19px;background:#fff;border:1px solid #b4b4b4"></div>
<div class="a" style="left:394px;top:264px;width:20px;height:624px;background:#fff;border:1px solid #b4b4b4"></div>
<svg style="left:0;top:0" width="1637" height="1058" viewBox="0 0 1637 1058">
<g stroke="#222" stroke-width="1.2">
<line x1="604.6" y1="138.5" x2="604.6" y2="153" />
<line x1="634.5" y1="138.5" x2="634.5" y2="153" />
<line x1="664.3" y1="138.5" x2="664.3" y2="153" />
<line x1="694.2" y1="138.5" x2="694.2" y2="153" />
<line x1="724.1" y1="138.5" x2="724.1" y2="153" />
<line x1="754.0" y1="138.5" x2="754.0" y2="153" />
<line x1="783.8" y1="138.5" x2="783.8" y2="153" />
<line x1="813.7" y1="138.5" x2="813.7" y2="153" />
<line x1="843.6" y1="138.5" x2="843.6" y2="153" />
<line x1="873.5" y1="138.5" x2="873.5" y2="153" />
<line x1="903.3" y1="138.5" x2="903.3" y2="153" />
<line x1="933.2" y1="138.5" x2="933.2" y2="153" />
<line x1="963.1" y1="138.5" x2="963.1" y2="153" />
<line x1="993.0" y1="138.5" x2="993.0" y2="153" />
<line x1="1022.8" y1="138.5" x2="1022.8" y2="153" />
<line x1="1052.7" y1="138.5" x2="1052.7" y2="153" />
<line x1="1082.6" y1="138.5" x2="1082.6" y2="153" />
<line x1="1112.5" y1="138.5" x2="1112.5" y2="153" />
<line x1="1142.3" y1="138.5" x2="1142.3" y2="153" />
<line x1="1172.2" y1="138.5" x2="1172.2" y2="153" />
<line x1="1202.1" y1="138.5" x2="1202.1" y2="153" />
<line x1="1232.0" y1="138.5" x2="1232.0" y2="153" />
<line x1="1261.8" y1="138.5" x2="1261.8" y2="153" />
<line x1="1291.7" y1="138.5" x2="1291.7" y2="153" />
<line x1="1321.6" y1="138.5" x2="1321.6" y2="153" />
<line x1="1351.5" y1="138.5" x2="1351.5" y2="153" />
<line x1="1381.3" y1="138.5" x2="1381.3" y2="153" />
<line x1="1411.2" y1="138.5" x2="1411.2" y2="153" />
<line x1="1441.1" y1="138.5" x2="1441.1" y2="153" />
<line x1="589.6" y1="150.5" x2="589.6" y2="153" />
<line x1="619.5" y1="150.5" x2="619.5" y2="153" />
<line x1="649.4" y1="150.5" x2="649.4" y2="153" />
<line x1="679.3" y1="150.5" x2="679.3" y2="153" />
<line x1="709.1" y1="150.5" x2="709.1" y2="153" />
<line x1="739.0" y1="150.5" x2="739.0" y2="153" />
<line x1="768.9" y1="150.5" x2="768.9" y2="153" />
<line x1="798.8" y1="150.5" x2="798.8" y2="153" />
<line x1="828.6" y1="150.5" x2="828.6" y2="153" />
<line x1="858.5" y1="150.5" x2="858.5" y2="153" />
<line x1="888.4" y1="150.5" x2="888.4" y2="153" />
<line x1="918.3" y1="150.5" x2="918.3" y2="153" />
<line x1="948.1" y1="150.5" x2="948.1" y2="153" />
<line x1="978.0" y1="150.5" x2="978.0" y2="153" />
<line x1="1007.9" y1="150.5" x2="1007.9" y2="153" />
<line x1="1037.8" y1="150.5" x2="1037.8" y2="153" />
<line x1="1067.6" y1="150.5" x2="1067.6" y2="153" />
<line x1="1097.5" y1="150.5" x2="1097.5" y2="153" />
<line x1="1127.4" y1="150.5" x2="1127.4" y2="153" />
<line x1="1157.3" y1="150.5" x2="1157.3" y2="153" />
<line x1="1187.1" y1="150.5" x2="1187.1" y2="153" />
<line x1="1217.0" y1="150.5" x2="1217.0" y2="153" />
<line x1="1246.9" y1="150.5" x2="1246.9" y2="153" />
<line x1="1276.8" y1="150.5" x2="1276.8" y2="153" />
<line x1="1306.6" y1="150.5" x2="1306.6" y2="153" />
<line x1="1336.5" y1="150.5" x2="1336.5" y2="153" />
<line x1="1366.4" y1="150.5" x2="1366.4" y2="153" />
<line x1="1396.3" y1="150.5" x2="1396.3" y2="153" />
<line x1="1426.1" y1="150.5" x2="1426.1" y2="153" />
<line x1="1456.0" y1="150.5" x2="1456.0" y2="153" />
<line x1="399.5" y1="860.6" x2="413" y2="860.6" />
<line x1="399.5" y1="830.8" x2="413" y2="830.8" />
<line x1="399.5" y1="800.9" x2="413" y2="800.9" />
<line x1="399.5" y1="771.1" x2="413" y2="771.1" />
<line x1="399.5" y1="741.2" x2="413" y2="741.2" />
<line x1="399.5" y1="711.3" x2="413" y2="711.3" />
<line x1="399.5" y1="681.5" x2="413" y2="681.5" />
<line x1="399.5" y1="651.6" x2="413" y2="651.6" />
<line x1="399.5" y1="621.8" x2="413" y2="621.8" />
<line x1="399.5" y1="591.9" x2="413" y2="591.9" />
<line x1="399.5" y1="562.0" x2="413" y2="562.0" />
<line x1="399.5" y1="532.2" x2="413" y2="532.2" />
<line x1="399.5" y1="502.3" x2="413" y2="502.3" />
<line x1="399.5" y1="472.5" x2="413" y2="472.5" />
<line x1="399.5" y1="442.6" x2="413" y2="442.6" />
<line x1="399.5" y1="412.7" x2="413" y2="412.7" />
<line x1="399.5" y1="382.9" x2="413" y2="382.9" />
<line x1="399.5" y1="353.0" x2="413" y2="353.0" />
<line x1="399.5" y1="323.2" x2="413" y2="323.2" />
<line x1="399.5" y1="293.3" x2="413" y2="293.3" />
<line x1="410.5" y1="875.6" x2="413" y2="875.6" />
<line x1="410.5" y1="845.7" x2="413" y2="845.7" />
<line x1="410.5" y1="815.9" x2="413" y2="815.9" />
<line x1="410.5" y1="786.0" x2="413" y2="786.0" />
<line x1="410.5" y1="756.1" x2="413" y2="756.1" />
<line x1="410.5" y1="726.3" x2="413" y2="726.3" />
<line x1="410.5" y1="696.4" x2="413" y2="696.4" />
<line x1="410.5" y1="666.5" x2="413" y2="666.5" />
<line x1="410.5" y1="636.7" x2="413" y2="636.7" />
<line x1="410.5" y1="606.8" x2="413" y2="606.8" />
<line x1="410.5" y1="577.0" x2="413" y2="577.0" />
<line x1="410.5" y1="547.1" x2="413" y2="547.1" />
<line x1="410.5" y1="517.2" x2="413" y2="517.2" />
<line x1="410.5" y1="487.4" x2="413" y2="487.4" />
<line x1="410.5" y1="457.5" x2="413" y2="457.5" />
<line x1="410.5" y1="427.7" x2="413" y2="427.7" />
<line x1="410.5" y1="397.8" x2="413" y2="397.8" />
<line x1="410.5" y1="368.0" x2="413" y2="368.0" />
<line x1="410.5" y1="338.1" x2="413" y2="338.1" />
<line x1="410.5" y1="308.2" x2="413" y2="308.2" />
<line x1="410.5" y1="278.4" x2="413" y2="278.4" />
</g>
<g font-family='"Liberation Sans",sans-serif' font-size="10.5" fill="#111" stroke="#111" stroke-width="0.25">
<text x="608.0" y="145">1</text>
<text x="637.9" y="145">2</text>
<text x="667.7" y="145">3</text>
<text x="697.6" y="145">4</text>
<text x="727.5" y="145">5</text>
<text x="757.4" y="145">6</text>
<text x="787.2" y="145">7</text>
<text x="817.1" y="145">8</text>
<text x="847.0" y="145">9</text>
<text x="876.9" y="145">10</text>
<text x="906.7" y="145">11</text>
<text x="936.6" y="145">12</text>
<text x="966.5" y="145">13</text>
<text x="996.4" y="145">14</text>
<text x="1026.2" y="145">15</text>
<text x="1056.1" y="145">16</text>
<text x="1086.0" y="145">17</text>
<text x="1115.9" y="145">18</text>
<text x="1145.7" y="145">19</text>
<text x="1175.6" y="145">20</text>
<text x="1205.5" y="145">21</text>
<text x="1235.4" y="145">22</text>
<text x="1265.2" y="145">23</text>
<text x="1295.1" y="145">24</text>
<text x="1325.0" y="145">25</text>
<text x="1354.9" y="145">26</text>
<text x="1384.7" y="145">27</text>
<text x="1414.6" y="145">28</text>
<text x="1444.5" y="145">29</text>
<text transform="translate(404.2,855.8) rotate(-90)">1</text>
<text transform="translate(404.2,826.0) rotate(-90)">2</text>
<text transform="translate(404.2,796.1) rotate(-90)">3</text>
<text transform="translate(404.2,766.3) rotate(-90)">4</text>
<text transform="translate(404.2,736.4) rotate(-90)">5</text>
<text transform="translate(404.2,706.5) rotate(-90)">6</text>
<text transform="translate(404.2,676.7) rotate(-90)">7</text>
<text transform="translate(404.2,646.8) rotate(-90)">8</text>
<text transform="translate(404.2,617.0) rotate(-90)">9</text>
<text transform="translate(404.2,587.1) rotate(-90)">10</text>
<text transform="translate(404.2,557.2) rotate(-90)">11</text>
<text transform="translate(404.2,527.4) rotate(-90)">12</text>
<text transform="translate(404.2,497.5) rotate(-90)">13</text>
<text transform="translate(404.2,467.7) rotate(-90)">14</text>
<text transform="translate(404.2,437.8) rotate(-90)">15</text>
<text transform="translate(404.2,407.9) rotate(-90)">16</text>
<text transform="translate(404.2,378.1) rotate(-90)">17</text>
<text transform="translate(404.2,348.2) rotate(-90)">18</text>
<text transform="translate(404.2,318.4) rotate(-90)">19</text>
<text transform="translate(404.2,288.5) rotate(-90)">20</text>
</g>
<rect x="574.5" y="263.5" width="886" height="627" fill="none" stroke="#000" stroke-width="1.3"/>
<rect x="600.5" y="278.5" width="832.7" height="592" fill="none" stroke="#000" stroke-width="1.3"/>
<polygon points="796.4,549.5 807.7,537.5 829.5,533.0 850.3,527.0 995.8,456.4 1100.0,403.4 1119.8,394.0 1142.6,381.6 1160.3,378.5 1169.7,372.9 1183.2,378.5 1190.5,379.0 1204.0,390.0 1223.7,348.0 1230.0,354.6 1249.7,361.8 1315.2,403.4 1318.3,412.8 1317.3,419.0 1329.8,464.8 1354.7,544.8 1424.3,619.8 1235.0,773.6 1235.0,755.5 1199.8,755.5 1199.8,756.6 1050.8,757.7 1025.9,757.7 969.2,743.0 957.8,740.7 949.9,758.9 876.2,733.9 869.4,712.4 858.0,676.0 844.4,637.5 834.2,605.8 834.2,576.3 827.4,574.0 813.8,567.2 811.5,557.0 804.7,551.3" fill="#FFFF80" stroke="#6c6c6c" stroke-width="1.0" stroke-linejoin="round"/>
<polygon points="995.8,456.4 1100.0,403.4 1119.8,394.0 1116.6,412.8 1120.8,425.3 1121.8,444.0 1127.0,458.5 1124.1,459.5 1115.6,465.1 1106.2,474.6 1093.0,485.0 1091.0,490.6 1071.2,510.5 1064.6,524.7 1062.7,524.7 1053.2,533.2 1047.8,525.0 1035.3,516.7 1033.0,510.5 1020.8,493.8 1012.5,491.8 1012.5,483.5 998.0,479.3 1002.0,475.0 1003.0,464.7 995.8,456.4" fill="#FAD155" stroke="#6c6c6c" stroke-width="1.0" stroke-linejoin="round"/>
<polygon points="1119.8,394.0 1142.6,381.6 1160.3,378.5 1169.7,372.9 1183.2,378.5 1190.5,379.0 1204.0,390.0 1223.7,348.0 1230.0,354.6 1249.7,361.8 1315.2,403.4 1318.3,412.8 1317.3,419.0 1329.8,464.8 1323.5,465.8 1312.0,460.2 1300.7,461.6 1295.5,465.8 1285.0,464.8 1284.0,473.0 1270.5,477.2 1243.5,475.2 1235.2,479.3 1224.8,477.2 1224.8,488.7 1210.2,496.0 1197.7,497.0 1190.5,495.0 1189.3,473.6 1172.3,478.4 1165.7,477.4 1158.1,495.4 1140.2,499.1 1139.2,487.8 1136.4,476.5 1127.9,459.5 1127.0,458.5 1121.8,444.0 1120.8,425.3 1116.6,412.8 1119.8,394.0" fill="#FAD155" stroke="#6c6c6c" stroke-width="1.0" stroke-linejoin="round"/>
<polygon points="1085.4,607.8 1096.7,595.6 1109.9,585.2 1116.6,583.3 1121.7,582.3 1132.6,578.5 1142.1,573.8 1145.9,568.7 1161.0,575.7 1170.4,585.2 1189.3,590.8 1202.6,594.6 1194.1,595.6 1197.5,614.8 1215.7,628.5 1230.4,644.3 1229.3,653.4 1223.6,653.4 1211.1,647.7 1204.3,646.6 1198.7,638.0 1194.1,639.8 1191.9,647.7 1174.8,656.8 1157.8,669.7 1148.8,659.1 1137.4,659.1 1134.0,653.4 1128.4,635.3 1125.0,623.9 1109.1,621.6 1100.0,618.2 1096.2,617.1" fill="#FAD155" stroke="#6c6c6c" stroke-width="1.0" stroke-linejoin="round"/>
<polygon points="946.5,599.4 949.9,608.0 949.9,621.6 954.4,622.8 959.7,635.3 959.7,661.3 965.8,662.5 966.9,671.5 978.3,676.1 981.7,685.2 979.4,694.2 970.3,703.3 968.0,719.2 969.6,732.8 969.2,743.0 1025.9,757.7 1050.8,757.7 1050.8,746.4 1058.8,735.0 1055.8,719.2 1059.9,701.0 1059.9,685.2 1055.8,673.8 1058.8,669.3 1066.7,670.4 1067.2,657.9 1072.4,651.1 1061.0,630.7 1048.6,617.1 1037.2,610.3 1034.9,592.2 1030.9,584.9 1021.3,589.9 1014.5,600.1 1000.9,601.2 993.0,607.6 989.6,605.8 973.7,605.8 971.4,608.0 964.6,604.6 955.6,604.6 951.5,595.6" fill="#FAD155" stroke="#6c6c6c" stroke-width="1.0" stroke-linejoin="round"/>
<polygon points="1091.0,490.6 1093.0,485.0 1106.2,474.6 1115.6,465.1 1124.1,459.5 1127.9,459.5 1136.4,476.5 1139.2,487.8 1140.2,499.1 1158.1,495.4 1149.6,515.2 1143.0,529.4 1139.2,538.8 1128.8,536.0 1118.4,538.8 1112.8,525.6 1100.5,503.0" fill="#F2A72E" stroke="#6c6c6c" stroke-width="1.0" stroke-linejoin="round"/>
<polygon points="1158.1,495.4 1165.7,477.4 1172.3,478.4 1189.3,473.6 1190.3,494.4 1184.6,508.6 1176.1,521.8 1165.7,538.8 1179.9,542.6 1189.3,544.5 1202.6,544.1 1209.2,552.1 1213.0,562.5 1206.4,568.1 1202.6,594.6 1189.3,590.8 1170.4,585.2 1161.0,575.7 1145.9,568.7 1136.4,563.4 1131.7,559.6 1132.6,554.9 1136.4,548.3 1139.2,538.8 1143.0,529.4 1149.6,515.2" fill="#F2A72E" stroke="#6c6c6c" stroke-width="1.0" stroke-linejoin="round"/>
<polygon points="1062.7,524.7 1064.6,524.7 1070.2,533.2 1089.1,540.7 1109.0,542.6 1109.0,550.2 1115.6,558.7 1110.3,561.5 1099.5,559.6 1102.4,565.3 1103.3,571.9 1111.8,576.7 1116.6,580.4 1121.7,582.3 1116.6,583.3 1109.9,585.2 1096.7,595.6 1085.4,607.8 1080.6,603.1 1077.8,597.4 1064.6,590.8 1070.2,585.2 1068.4,574.8 1063.6,569.1 1056.1,563.4 1058.9,548.3 1053.2,533.2" fill="#F2A72E" stroke="#6c6c6c" stroke-width="1.0" stroke-linejoin="round"/>
<polygon points="1091.0,490.6 1071.2,510.5 1064.6,524.7 1070.2,533.2 1089.1,540.7 1109.0,542.6 1118.4,538.8 1112.8,525.6 1100.5,503.0" fill="#AD5313" stroke="#6c6c6c" stroke-width="1.0" stroke-linejoin="round"/>
<polygon points="1109.0,543.6 1118.4,539.2 1128.8,536.0 1139.2,538.8 1136.4,548.3 1132.6,554.9 1127.9,551.1 1115.6,558.7 1109.0,550.2" fill="#6B0000" stroke="#6c6c6c" stroke-width="1.0" stroke-linejoin="round"/>
<polygon points="1099.5,559.6 1110.3,561.5 1113.7,570.0 1120.3,572.9 1121.7,582.3 1116.6,580.4 1111.8,576.7 1103.3,571.9 1102.4,565.3" fill="#6B0000" stroke="#6c6c6c" stroke-width="1.0" stroke-linejoin="round"/>
<polygon points="1131.7,559.6 1136.4,563.4 1145.9,568.7 1142.1,573.8 1132.6,578.5 1123.2,581.4 1124.1,573.8 1127.3,567.2" fill="#6B0000" stroke="#6c6c6c" stroke-width="1.0" stroke-linejoin="round"/>
<polygon points="1127.9,551.1 1132.6,555.9 1130.7,559.6 1127.0,567.2 1123.2,574.8 1121.7,581.4 1120.3,572.9 1113.7,570.0 1110.3,561.5 1115.6,558.7" fill="#AD5313" stroke="#6c6c6c" stroke-width="1.0" stroke-linejoin="round"/>
<polyline points="995.8,456.4 1003.0,464.7 1002.0,475.0 998.0,479.3 1012.5,483.5 1012.5,491.8 1020.8,493.8 1033.0,510.5 1035.3,516.7 1047.8,525.0 1053.0,533.3" fill="none" stroke="#6c6c6c" stroke-width="1.0" stroke-linejoin="round"/>
<polyline points="834.2,576.3 850.1,580.8 858.0,591.0 869.4,597.8 880.7,605.8 889.8,603.5 901.1,606.9 910.2,613.0 917.0,606.9 921.5,605.8 927.2,599.0 925.0,593.3 932.9,595.6 940.8,594.4 946.5,599.4 951.5,595.6 955.6,604.6 964.6,604.6 971.4,608.0 973.7,605.8 989.6,605.8 993.0,607.6 1000.9,601.2 1014.5,600.1 1021.3,589.9 1030.9,584.9 1030.0,577.4 1033.8,574.5 1046.3,576.3 1051.3,572.9 1058.9,569.1 1063.6,569.1" fill="none" stroke="#6c6c6c" stroke-width="1.0" stroke-linejoin="round"/>
<polyline points="1329.8,464.8 1323.5,465.8 1312.0,460.2 1300.7,461.6 1295.5,465.8 1285.0,464.8 1284.0,473.0 1270.5,477.2 1243.5,475.2 1235.2,479.3 1224.8,477.2 1224.8,488.7 1210.2,496.0 1197.7,497.0 1190.5,495.0" fill="none" stroke="#6c6c6c" stroke-width="1.0" stroke-linejoin="round"/>
<polyline points="1354.0,545.7 1350.6,551.3 1338.1,562.7 1327.9,578.6 1317.7,584.2 1312.1,593.3 1310.9,604.6 1308.7,608.0 1296.2,606.9 1289.4,610.3 1284.8,617.1 1273.5,620.5 1267.8,619.8 1265.6,612.6 1258.8,613.0 1253.1,609.2 1241.8,617.1 1238.4,623.9 1232.7,638.7 1229.7,647.7 1229.3,653.4 1230.4,664.7 1233.8,682.9 1245.2,698.8 1250.8,711.2 1258.8,719.2 1262.2,728.3 1266.0,732.8 1266.0,739.6 1259.9,747.5 1258.1,754.3" fill="none" stroke="#6c6c6c" stroke-width="1.0" stroke-linejoin="round"/>
<polyline points="1157.8,669.7 1154.4,673.8 1161.2,678.4 1168.0,685.2 1173.0,688.6 1173.0,696.5 1177.6,698.8 1176.0,707.8 1171.4,709.0 1172.6,714.6 1178.2,721.4 1190.7,721.4 1190.7,727.1 1185.0,727.1 1185.0,732.8 1176.0,735.0 1170.8,743.0 1169.2,756.6" fill="none" stroke="#6c6c6c" stroke-width="1.0" stroke-linejoin="round"/>
<polyline points="1063.6,569.1 1068.4,574.8 1070.2,585.2 1064.6,590.8 1077.8,597.4 1080.6,603.1 1085.4,607.8" fill="none" stroke="#6c6c6c" stroke-width="1.0" stroke-linejoin="round"/>
<rect x="624.4" y="343.7" width="111.8" height="207" fill="#b2b2b2"/>
<rect x="614.3" y="333.7" width="111.4" height="208" fill="#F5C97A" stroke="#222" stroke-width="1.2"/>
<rect x="624.3" y="414.3" width="41.5" height="18.3" fill="#FFFF80" stroke="#7a7a7a" stroke-width="1"/>
<text x="672.6" y="426.3" font-family='"Liberation Mono",monospace' font-weight="bold" font-size="8.4" fill="#111">2 - 3</text>
<rect x="624.3" y="438.5" width="41.5" height="18.3" fill="#FAD155" stroke="#7a7a7a" stroke-width="1"/>
<text x="672.6" y="450.5" font-family='"Liberation Mono",monospace' font-weight="bold" font-size="8.4" fill="#111">4 - 7</text>
<rect x="624.3" y="463.3" width="41.5" height="18.3" fill="#F2A72E" stroke="#7a7a7a" stroke-width="1"/>
<text x="672.6" y="475.3" font-family='"Liberation Mono",monospace' font-weight="bold" font-size="8.4" fill="#111">8 - 33</text>
<rect x="624.3" y="488.2" width="41.5" height="18.3" fill="#AD5313" stroke="#7a7a7a" stroke-width="1"/>
<text x="672.6" y="500.2" font-family='"Liberation Mono",monospace' font-weight="bold" font-size="8.4" fill="#111">34 - 94</text>
<rect x="624.3" y="513.2" width="41.5" height="18.3" fill="#6B0000" stroke="#7a7a7a" stroke-width="1"/>
<text x="672.6" y="525.2" font-family='"Liberation Mono",monospace' font-weight="bold" font-size="8.4" fill="#111">95 - 167</text>
<text x="624" y="359" font-family='"Noto Serif CJK SC",serif' font-weight="900" font-size="17.5" fill="#000">图例</text>
<text x="624" y="384.5" font-family='"Liberation Mono",monospace' font-weight="bold" font-size="12.8" fill="#000">tracts</text>
<text x="624" y="404.5" font-family='"Liberation Mono",monospace' font-weight="bold" font-size="10.7" fill="#000">POP_DEN</text>
<text x="851" y="323.5" font-family='"Noto Sans CJK SC",sans-serif' font-weight="300" font-size="27.1" fill="#333"><tspan font-size="40" dy="13" letter-spacing="-5">**</tspan><tspan dy="-13" dx="4">机场附近的人口分布图</tspan></text>
<text x="1409.9" y="297.6" font-family='"Liberation Sans",sans-serif' font-size="15.6" fill="#111" stroke="#111" stroke-width="0.45">N</text>
<path d="M1414.6 301.2 L1403.8 338.4 L1414.8 324.3z" fill="#000" stroke="#000" stroke-width="0.8" stroke-linejoin="miter"/>
<path d="M1414.6 301.2 L1425.8 338.2 L1414.8 324.3z" fill="#fff" stroke="#000" stroke-width="1.3" stroke-linejoin="miter"/>
<rect x="633.7" y="844" width="399" height="17.2" fill="#000"/>
<rect x="683.4" y="845.2" width="49.4" height="14.8" fill="#fff"/>
<rect x="783.3" y="845.2" width="49.3" height="14.8" fill="#fff"/>
<text x="605.5" y="836.2" font-family='"Liberation Sans",sans-serif' font-size="16.8" fill="#222" textLength="56" lengthAdjust="spacing">50,000</text>
<text x="704" y="836.2" font-family='"Liberation Sans",sans-serif' font-size="16.8" fill="#222" textLength="56" lengthAdjust="spacing">25,000</text>
<text x="827.6" y="836.2" font-family='"Liberation Sans",sans-serif' font-size="16.8" fill="#222">0</text>
<text x="1003" y="836.2" font-family='"Liberation Sans",sans-serif' font-size="16.8" fill="#222" textLength="56" lengthAdjust="spacing">50,000</text>
<text x="1065" y="836" font-family='"Noto Serif CJK SC",serif' font-size="17.5" fill="#111">米</text>
<clipPath id="c1"><polygon points="810,195 829.2,195 829.2,235 824.7,235 824.7,223.8 810,223.8"/></clipPath>
<text x="817.6" y="228.3" font-family='"Noto Sans CJK SC",sans-serif' font-weight="700" font-size="30.5" fill="#3d46c8" clip-path="url(#c1)">1</text>
<text x="832.7" y="228.6" font-family='"Noto Sans CJK SC",sans-serif' font-weight="700" font-size="30.5" fill="#3d46c8">.</text>
<text x="851" y="227" font-family='"Noto Serif CJK SC",serif' font-weight="900" font-size="24" fill="#3d46c8" letter-spacing="7.5">调整一下大小和位置</text>
<path d="M831.35 222.8 L832.65 222.8 L834.3 765.6 L839.1 764.1 L831 780.6 L823 764.1 L827.8 765.6 Z" fill="#3d46c8"/>
<rect x="558" y="785.3" width="552.5" height="125.3" rx="2" fill="none" stroke="#3d46c8" stroke-width="5.6"/>
</svg>
<div class="a" style="left:1576px;top:129px;width:62px;height:27.5px;background:#c5d3e3"></div>
<div class="t " style="left:1581.5px;top:132.3px;font-size:15px;line-height:21px;height:21px;color:#000;">目录</div>
<div class="a" style="left:1576px;top:159px;width:62px;height:25.5px;background:#fff"></div>
<svg style="left:1584px;top:163px" width="20" height="18.5" viewBox="0 0 22 19"><path d="M1.5 9.5 L10.5 1.5 V6 H20 V13 H10.5 V17.5z" fill="#e4e4e4" stroke="#8a8a8a" stroke-width="1.6"/></svg>
<svg style="left:1613px;top:169px" width="10" height="6" viewBox="0 0 10 6"><path d="M0.5 0.5h9l-4.5 5z" fill="#777"/></svg>
<div class="a" style="left:1633px;top:169px;width:6px;height:6px;border:1.5px solid #777;background:#eee"></div>
<div class="t " style="left:1580.5px;top:193.3px;font-size:15px;line-height:21px;height:21px;color:#000;">位置:</div>
<div class="a" style="left:1576.5px;top:219.5px;width:63px;height:767.5px;background:#fff;border-left:2.5px solid #646464;border-top:2.5px solid #646464;border-bottom:1.5px solid #b0b0b0"></div>
<div class="a" style="left:1580px;top:226.6px;width:4px;height:10px;border:1px solid #9a9a9a;border-left:none;background:#fafafa"></div>
<svg style="left:1590px;top:222.6px" width="22" height="19" viewBox="0 0 22 19"><path d="M1 17.500v-14.500h7l2 2.500h10.500v12z" fill="#d8bf5a" stroke="#8a7420" stroke-width="1"/><path d="M1 17.500v-9.500h19.500v9.500z" fill="#f0e08a" stroke="#8a7420" stroke-width="1"/><path d="M9 13l5-4.5 5 4.500v5h-10z" fill="#f7f0c8" stroke="#7a6a20" stroke-width="1"/><path d="M8 13.500l6-5.5 6 5.5" fill="none" stroke="#7a5a10" stroke-width="1.3"/><rect x="12.7" y="14" width="2.6" height="4" fill="#7a5a10"/></svg>
<div class="a" style="left:1613.5px;top:221.1px;width:26px;height:21px;background:#f0f0f0"></div>
<div class="t " style="left:1616px;top:221.1px;font-size:15.5px;line-height:21px;height:21px;color:#000;">默认</div>
<div class="a" style="left:1580px;top:248px;width:4px;height:10px;border:1px solid #9a9a9a;border-left:none;background:#fafafa"></div>
<svg style="left:1590px;top:244px" width="22" height="19" viewBox="0 0 22 19"><path d="M1 17.500v-14.500h7l2 2.500h10.500v12z" fill="#d8bf5a" stroke="#8a7420" stroke-width="1"/><path d="M1 17.500v-9.500h19.500v9.500z" fill="#f0e08a" stroke="#8a7420" stroke-width="1"/><rect x="11" y="9.5" width="8" height="7" fill="#f7f0c8" stroke="#7a6a20" stroke-width="0.9"/><path d="M13.5 11l3.5 2-3.5 2z" fill="#333"/></svg>
<div class="t " style="left:1616px;top:242.5px;font-size:15.5px;line-height:21px;height:21px;color:#000;">文件</div>
<svg style="left:1595px;top:269px" width="11" height="11" viewBox="0 0 11 11"><rect x="0.5" y="0.5" width="10" height="10" rx="1.5" fill="#fafafa" stroke="#9a9a9a"/><path d="M2.5 5.5h6M5.5 2.5v6" stroke="#3b4a9c" stroke-width="1.2"/></svg>
<svg style="left:1614px;top:265.5px" width="22" height="19" viewBox="0 0 22 19"><path d="M1 17.500v-14.500h7l2 2.500h10.500v12z" fill="#d8bf5a" stroke="#8a7420" stroke-width="1"/><path d="M1 17.500v-9.500h19.500v9.500z" fill="#f0e08a" stroke="#8a7420" stroke-width="1"/><path d="M2 9.500l5.5 4-5.5 4z" fill="#333"/></svg>
<svg style="left:1595px;top:290px" width="11" height="11" viewBox="0 0 11 11"><rect x="0.5" y="0.5" width="10" height="10" rx="1.5" fill="#fafafa" stroke="#9a9a9a"/><path d="M2.5 5.5h6M5.5 2.5v6" stroke="#3b4a9c" stroke-width="1.2"/></svg>
<svg style="left:1614px;top:286.5px" width="22" height="19" viewBox="0 0 22 19"><path d="M1 17.500v-14.500h7l2 2.500h10.500v12z" fill="#d8bf5a" stroke="#8a7420" stroke-width="1"/><path d="M1 17.500v-9.500h19.500v9.500z" fill="#f0e08a" stroke="#8a7420" stroke-width="1"/><path d="M2 9.500l5.5 4-5.5 4z" fill="#333"/></svg>
<svg style="left:1595px;top:311.5px" width="11" height="11" viewBox="0 0 11 11"><rect x="0.5" y="0.5" width="10" height="10" rx="1.5" fill="#fafafa" stroke="#9a9a9a"/><path d="M2.5 5.5h6M5.5 2.5v6" stroke="#3b4a9c" stroke-width="1.2"/></svg>
<svg style="left:1614px;top:308px" width="22" height="19" viewBox="0 0 22 19"><path d="M1 17.500v-14.500h7l2 2.500h10.500v12z" fill="#d8bf5a" stroke="#8a7420" stroke-width="1"/><path d="M1 17.500v-9.500h19.500v9.500z" fill="#f0e08a" stroke="#8a7420" stroke-width="1"/><path d="M2 9.500l5.5 4-5.5 4z" fill="#333"/></svg>
<div class="a" style="left:1580px;top:333.5px;width:4px;height:10px;border:1px solid #9a9a9a;border-left:none;background:#fafafa"></div>
<svg style="left:1590px;top:328.5px" width="22" height="21" viewBox="0 0 22 21"><path d="M1 17.500v-14.500h7l2 2.500h10.500v12z" fill="#d8bf5a" stroke="#8a7420" stroke-width="1"/><path d="M1 17.500v-9.500h19.500v9.500z" fill="#f0e08a" stroke="#8a7420" stroke-width="1"/><path d="M4.5 11 L10.5 8.5 L18.5 11 V17 L11.5 19.5 L4.5 17z" fill="#cf3a2c" stroke="#7a1810" stroke-width="0.9"/><path d="M4.5 11 L11.5 13.2 L18.5 11 L10.5 8.5z" fill="#ee7466" stroke="#7a1810" stroke-width="0.7"/><path d="M11.5 13.2v6.3" stroke="#7a1810" stroke-width="0.8"/><path d="M8.5 10c0-2.600 6-2.600 6 0" fill="none" stroke="#e8e8e8" stroke-width="1.200"/><path d="M6 14.500l4 1.200M13 15.700l4-1.200" stroke="#f2a79d" stroke-width="0.8"/></svg>
<div class="t " style="left:1616px;top:328px;font-size:15.5px;line-height:21px;height:21px;color:#000;">工具</div>
<svg style="left:1595px;top:354.2px" width="11" height="11" viewBox="0 0 11 11"><rect x="0.5" y="0.5" width="10" height="10" rx="1.5" fill="#fafafa" stroke="#9a9a9a"/><path d="M2.5 5.5h6M5.5 2.5v6" stroke="#3b4a9c" stroke-width="1.2"/></svg>
<svg style="left:1614px;top:349.7px" width="22" height="21" viewBox="0 0 22 21"><path d="M1 17.500v-14.500h7l2 2.500h10.500v12z" fill="#d8bf5a" stroke="#8a7420" stroke-width="1"/><path d="M1 17.500v-9.500h19.500v9.500z" fill="#f0e08a" stroke="#8a7420" stroke-width="1"/><path d="M4.5 11 L10.5 8.5 L18.5 11 V17 L11.5 19.5 L4.5 17z" fill="#cf3a2c" stroke="#7a1810" stroke-width="0.9"/><path d="M4.5 11 L11.5 13.2 L18.5 11 L10.5 8.5z" fill="#ee7466" stroke="#7a1810" stroke-width="0.7"/><path d="M11.5 13.2v6.3" stroke="#7a1810" stroke-width="0.8"/><path d="M8.5 10c0-2.600 6-2.600 6 0" fill="none" stroke="#e8e8e8" stroke-width="1.200"/><path d="M6 14.500l4 1.200M13 15.700l4-1.200" stroke="#f2a79d" stroke-width="0.8"/></svg>
<svg style="left:1595px;top:375.2px" width="11" height="11" viewBox="0 0 11 11"><rect x="0.5" y="0.5" width="10" height="10" rx="1.5" fill="#fafafa" stroke="#9a9a9a"/><path d="M2.5 5.5h6M5.5 2.5v6" stroke="#3b4a9c" stroke-width="1.2"/></svg>
<svg style="left:1614px;top:370.7px" width="22" height="21" viewBox="0 0 22 21"><path d="M1 17.500v-14.500h7l2 2.500h10.500v12z" fill="#d8bf5a" stroke="#8a7420" stroke-width="1"/><path d="M1 17.500v-9.500h19.500v9.500z" fill="#f0e08a" stroke="#8a7420" stroke-width="1"/><path d="M4.5 11 L10.5 8.5 L18.5 11 V17 L11.5 19.5 L4.5 17z" fill="#cf3a2c" stroke="#7a1810" stroke-width="0.9"/><path d="M4.5 11 L11.5 13.2 L18.5 11 L10.5 8.5z" fill="#ee7466" stroke="#7a1810" stroke-width="0.7"/><path d="M11.5 13.2v6.3" stroke="#7a1810" stroke-width="0.8"/><path d="M8.5 10c0-2.600 6-2.600 6 0" fill="none" stroke="#e8e8e8" stroke-width="1.200"/><path d="M6 14.500l4 1.200M13 15.700l4-1.200" stroke="#f2a79d" stroke-width="0.8"/></svg>
<div class="a" style="left:1580px;top:397px;width:4px;height:10px;border:1px solid #9a9a9a;border-left:none;background:#fafafa"></div>
<svg style="left:1590px;top:393px" width="22" height="22" viewBox="0 0 22 22"><path d="M1 17.500v-14.500h7l2 2.500h10.500v12z" fill="#d8bf5a" stroke="#8a7420" stroke-width="1"/><path d="M1 17.500v-9.500h19.500v9.500z" fill="#f0e08a" stroke="#8a7420" stroke-width="1"/><rect x="9.5" y="9" width="9.5" height="8" fill="#f4f4f4" stroke="#555" stroke-width="0.9"/><circle cx="14.3" cy="13" r="2.5" fill="#4a9ae0" stroke="#1f4f90" stroke-width="0.8"/><path d="M14.3 17v3M11 20.500h6.5" stroke="#444" stroke-width="1.2"/></svg>
<div class="t " style="left:1616px;top:391.5px;font-size:15.5px;line-height:21px;height:21px;color:#000;">追踪</div>
<div class="a" style="left:1580px;top:966.5px;width:58px;height:18.5px;background:#f0f0f0"></div>
<div class="a" style="left:1610px;top:967px;width:28px;height:17.5px;background:#cdcdcd"></div>
<svg style="left:1581px;top:968px" width="16" height="16" viewBox="0 0 16 16"><path d="M10.5 2.5 L5.5 7.5 L10.5 12.5" fill="none" stroke="#505050" stroke-width="2.2"/></svg>
<div class="a" style="left:1579.5px;top:988.5px;width:60px;height:28px;background:#f4f4f4;border:1px solid #a8a8a8;border-top:none;border-radius:0 0 0 4px"></div>
<svg style="left:1585px;top:994px" width="22" height="20" viewBox="0 0 22 20"><rect x="0.7" y="0.7" width="20" height="16" fill="#fff" stroke="#3c4a66" stroke-width="1.2"/><rect x="0.7" y="0.7" width="20" height="3" fill="#2c4f9e"/><circle cx="10.5" cy="12" r="6.5" fill="#1c5fd0" stroke="#0b2f8a" stroke-width="0.8"/><text x="8.5" y="16.5" font-family="Liberation Serif,serif" font-weight="bold" font-size="11" fill="#fff">i</text></svg>
<div class="t " style="left:1609px;top:994px;font-size:15.2px;line-height:21px;height:21px;color:#8a8a8a;">识别</div>
<div class="t " style="left:1522.5px;top:1031px;font-size:14.1px;line-height:19px;height:19px;color:#9c9c9c;">CSDN @炒茄子</div>
<div class="a" style="left:393px;top:1020px;width:860px;height:36px;background:linear-gradient(180deg,#fbfbfb,#efefef);border-radius:4px"></div>
<svg style="left:396.5px;top:1026px" width="4" height="20" viewBox="0 0 4 20"><rect x="0.5" y="1" width="2.3" height="2.3" fill="#b9b9b9"/><rect x="0.5" y="6" width="2.3" height="2.3" fill="#b9b9b9"/><rect x="0.5" y="11" width="2.3" height="2.3" fill="#b9b9b9"/><rect x="0.5" y="16" width="2.3" height="2.3" fill="#b9b9b9"/></svg>
<div class="t " style="left:407px;top:1026.5px;font-size:14.6px;line-height:20px;height:20px;color:#000;">绘制(D)</div>
<svg style="left:462px;top:1035px" width="8" height="5" viewBox="0 0 8 5"><path d="M0 0h8l-4 4.500z" fill="#111"/></svg>
<div class="a" style="left:472.5px;top:1023px;width:27.5px;height:26.5px;background:#d9eaf8;border:1px solid #2a8ad4"></div>
<svg style="left:476px;top:1026.5px" width="20" height="20" viewBox="0 0 20 20"><path d="M5 1.5 L5 16.5 L8.7 13 L11.3 19 L14 17.8 L11.4 12 L16.5 11.800z" fill="#111" stroke="#111" stroke-width="0.6"/></svg>
<svg style="left:502px;top:1024.5px" width="23" height="23" viewBox="0 0 20 20"><path d="M16 14a7.5 7.5 0 1 1 1.5-6" fill="none" stroke="#bdbdbd" stroke-width="1.2"/><path d="M19.5 11.500l-3 4-2-4.500z" fill="#bdbdbd"/><rect x="8.5" y="8.5" width="3" height="3" fill="none" stroke="#bdbdbd"/></svg>
<svg style="left:530.5px;top:1024.5px" width="23" height="23" viewBox="0 0 20 20"><rect x="3.5" y="2.5" width="15" height="15" fill="#fff" stroke="#555" stroke-width="1.2"/><rect x="11" y="4" width="3" height="3" fill="#444"/><rect x="14.5" y="9" width="3" height="3" fill="#444"/><rect x="11" y="13" width="3" height="3" fill="#444"/><circle cx="6.5" cy="8.5" r="4.8" fill="#f4f4f4" stroke="#777" stroke-width="1.2"/><path d="M4 8.500h5M6.5 6v5" stroke="#111" stroke-width="1.8"/><path d="M10 12.500l4.5 4.5" stroke="#a5573a" stroke-width="2.4" stroke-linecap="round"/></svg>
<div class="a" style="left:557.5px;top:1024px;width:1px;height:24px;background:#bdbdbd"></div>
<svg style="left:563.5px;top:1024.5px" width="23" height="23" viewBox="0 0 20 20"><rect x="3" y="3" width="14.5" height="14.5" fill="#fff" stroke="#555" stroke-width="1.2"/><path d="M4 16.500h12.500v-12" stroke="#cfcfcf" stroke-width="1.5" fill="none"/></svg>
<svg style="left:591px;top:1035px" width="8" height="5" viewBox="0 0 8 5"><path d="M0 0h8l-4 4.500z" fill="#111"/></svg>
<div class="t " style="left:608.5px;top:1022px;font-size:21px;line-height:29px;height:29px;color:#111;font-family:'Liberation Serif',serif;font-weight:bold">A</div>
<svg style="left:633px;top:1035px" width="8" height="5" viewBox="0 0 8 5"><path d="M0 0h8l-4 4.500z" fill="#111"/></svg>
<svg style="left:647.3px;top:1024.5px" width="23" height="23" viewBox="0 0 20 20"><path d="M3 14.5l3.5-8 10-3.5-3 5 3.5 8.5z" fill="#ededed" stroke="#c0c0c0" stroke-width="1.1"/><rect x="1.5" y="13" width="3" height="3" fill="#c4c4c4"/><rect x="5" y="5" width="3" height="3" fill="#c4c4c4"/><rect x="15" y="1.5" width="3" height="3" fill="#c4c4c4"/><rect x="12" y="6.5" width="3" height="3" fill="#c4c4c4"/><rect x="15.5" y="15" width="3" height="3" fill="#c4c4c4"/></svg>
<div class="a" style="left:675px;top:1024px;width:1px;height:24px;background:#bdbdbd"></div>
<div class="a" style="left:680px;top:1024.5px;width:213px;height:23.5px;background:#fff;border:1px solid #7a7a7a"></div>
<div class="a" style="left:684.5px;top:1028px;width:15px;height:16px;background:#e8f0fa;border:1px solid #5a7ab0"></div>
<div class="t " style="left:688px;top:1026.5px;font-size:14px;line-height:19px;height:19px;color:#1a3f9a;font-family:'Liberation Serif',serif;font-weight:bold"><i>0</i></div>
<div class="t " style="left:706px;top:1026.5px;font-size:14.5px;line-height:20px;height:20px;color:#000;">宋体</div>
<svg style="left:876px;top:1033px" width="14" height="9" viewBox="0 0 14 9"><path d="M1.5 1.500l5.5 5.5 5.5-5.5" fill="none" stroke="#444" stroke-width="1.3"/></svg>
<div class="a" style="left:894px;top:1024.5px;width:57px;height:23.5px;background:#fff;border:1px solid #7a7a7a"></div>
<div class="t " style="left:897.5px;top:1027px;font-size:13.5px;line-height:18px;height:18px;color:#000;">48</div>
<svg style="left:933px;top:1033px" width="14" height="9" viewBox="0 0 14 9"><path d="M1.5 1.500l5.5 5.5 5.5-5.5" fill="none" stroke="#444" stroke-width="1.3"/></svg>
<div class="t " style="left:959.5px;top:1025.5px;font-size:17px;line-height:23px;height:23px;color:#111;font-family:'Liberation Serif',serif;font-weight:bold">B</div>
<div class="t " style="left:988.5px;top:1025.5px;font-size:17px;line-height:23px;height:23px;color:#111;font-family:'Liberation Serif',serif;font-weight:bold"><i>I</i></div>
<div class="t " style="left:1014.5px;top:1025.5px;font-size:17px;line-height:23px;height:23px;color:#111;font-family:'Liberation Serif',serif;font-weight:bold;text-decoration:underline">U</div>
<div class="a" style="left:1037px;top:1024px;width:1px;height:24px;background:#bdbdbd"></div>
<div class="t " style="left:1048.5px;top:1020px;font-size:19px;line-height:26px;height:26px;color:#111;font-family:'Liberation Serif',serif;font-weight:bold">A</div>
<div class="a" style="left:1045px;top:1043px;width:22px;height:3px;background:#000"></div>
<svg style="left:1075.5px;top:1035px" width="8" height="5" viewBox="0 0 8 5"><path d="M0 0h8l-4 4.500z" fill="#111"/></svg>
<svg style="left:1092px;top:1020.5px" width="23" height="23" viewBox="0 0 20 20"><path d="M6 6l5-3.5 6 6.5-5.5 5z" fill="#eee" stroke="#555" stroke-width="1.2"/><path d="M9.5 2c-3-1-4 2-2 4" fill="none" stroke="#8a5a2a" stroke-width="1.3"/><path d="M15.5 10.500c1.5 1.5 1.5 4 .500 5" fill="none" stroke="#8a5a2a" stroke-width="1.5"/></svg>
<div class="a" style="left:1092.5px;top:1043px;width:22px;height:3px;background:#ffffa0"></div>
<svg style="left:1123px;top:1035px" width="8" height="5" viewBox="0 0 8 5"><path d="M0 0h8l-4 4.500z" fill="#111"/></svg>
<svg style="left:1139.5px;top:1020.5px" width="23" height="23" viewBox="0 0 20 20"><path d="M3 16l2-5 8.5-8 3 3-8.5 8z" fill="#ddd" stroke="#333" stroke-width="1.2"/><path d="M12 4.500l3 3" stroke="#333"/><circle cx="15" cy="4" r="2.3" fill="none" stroke="#333" stroke-width="1.1"/><path d="M3 16l2-1" stroke="#111" stroke-width="1.6"/></svg>
<div class="a" style="left:1140px;top:1043px;width:22px;height:3px;background:#000"></div>
<svg style="left:1170.3px;top:1035px" width="8" height="5" viewBox="0 0 8 5"><path d="M0 0h8l-4 4.500z" fill="#111"/></svg>
<div class="a" style="left:1195.5px;top:1030px;width:5.5px;height:5.5px;background:#0a0ac8;border-radius:3px"></div>
<div class="a" style="left:1187.5px;top:1043px;width:22px;height:3px;background:#6cf01a"></div>
<svg style="left:1217.8px;top:1035px" width="8" height="5" viewBox="0 0 8 5"><path d="M0 0h8l-4 4.500z" fill="#111"/></svg>
<svg style="left:1232.5px;top:1020px" width="14" height="36" viewBox="0 0 14 36"><defs><linearGradient id="og1232" x1="0" y1="0" x2="0" y2="1"><stop offset="0" stop-color="#f2f2f2"/><stop offset="1" stop-color="#a4a4a4"/></linearGradient></defs><path d="M1 0h12.500v34 q0 2 -2 2 h-11.500z" fill="url(#og1232)"/><path d="M4 23h6.5" stroke="#111" stroke-width="1.4"/><path d="M3.5 26h7.500l-3.750 4z" fill="#111"/><path d="M7.8 30.5 l3 -3" stroke="#fff" stroke-width="1"/></svg>
</body></html>
